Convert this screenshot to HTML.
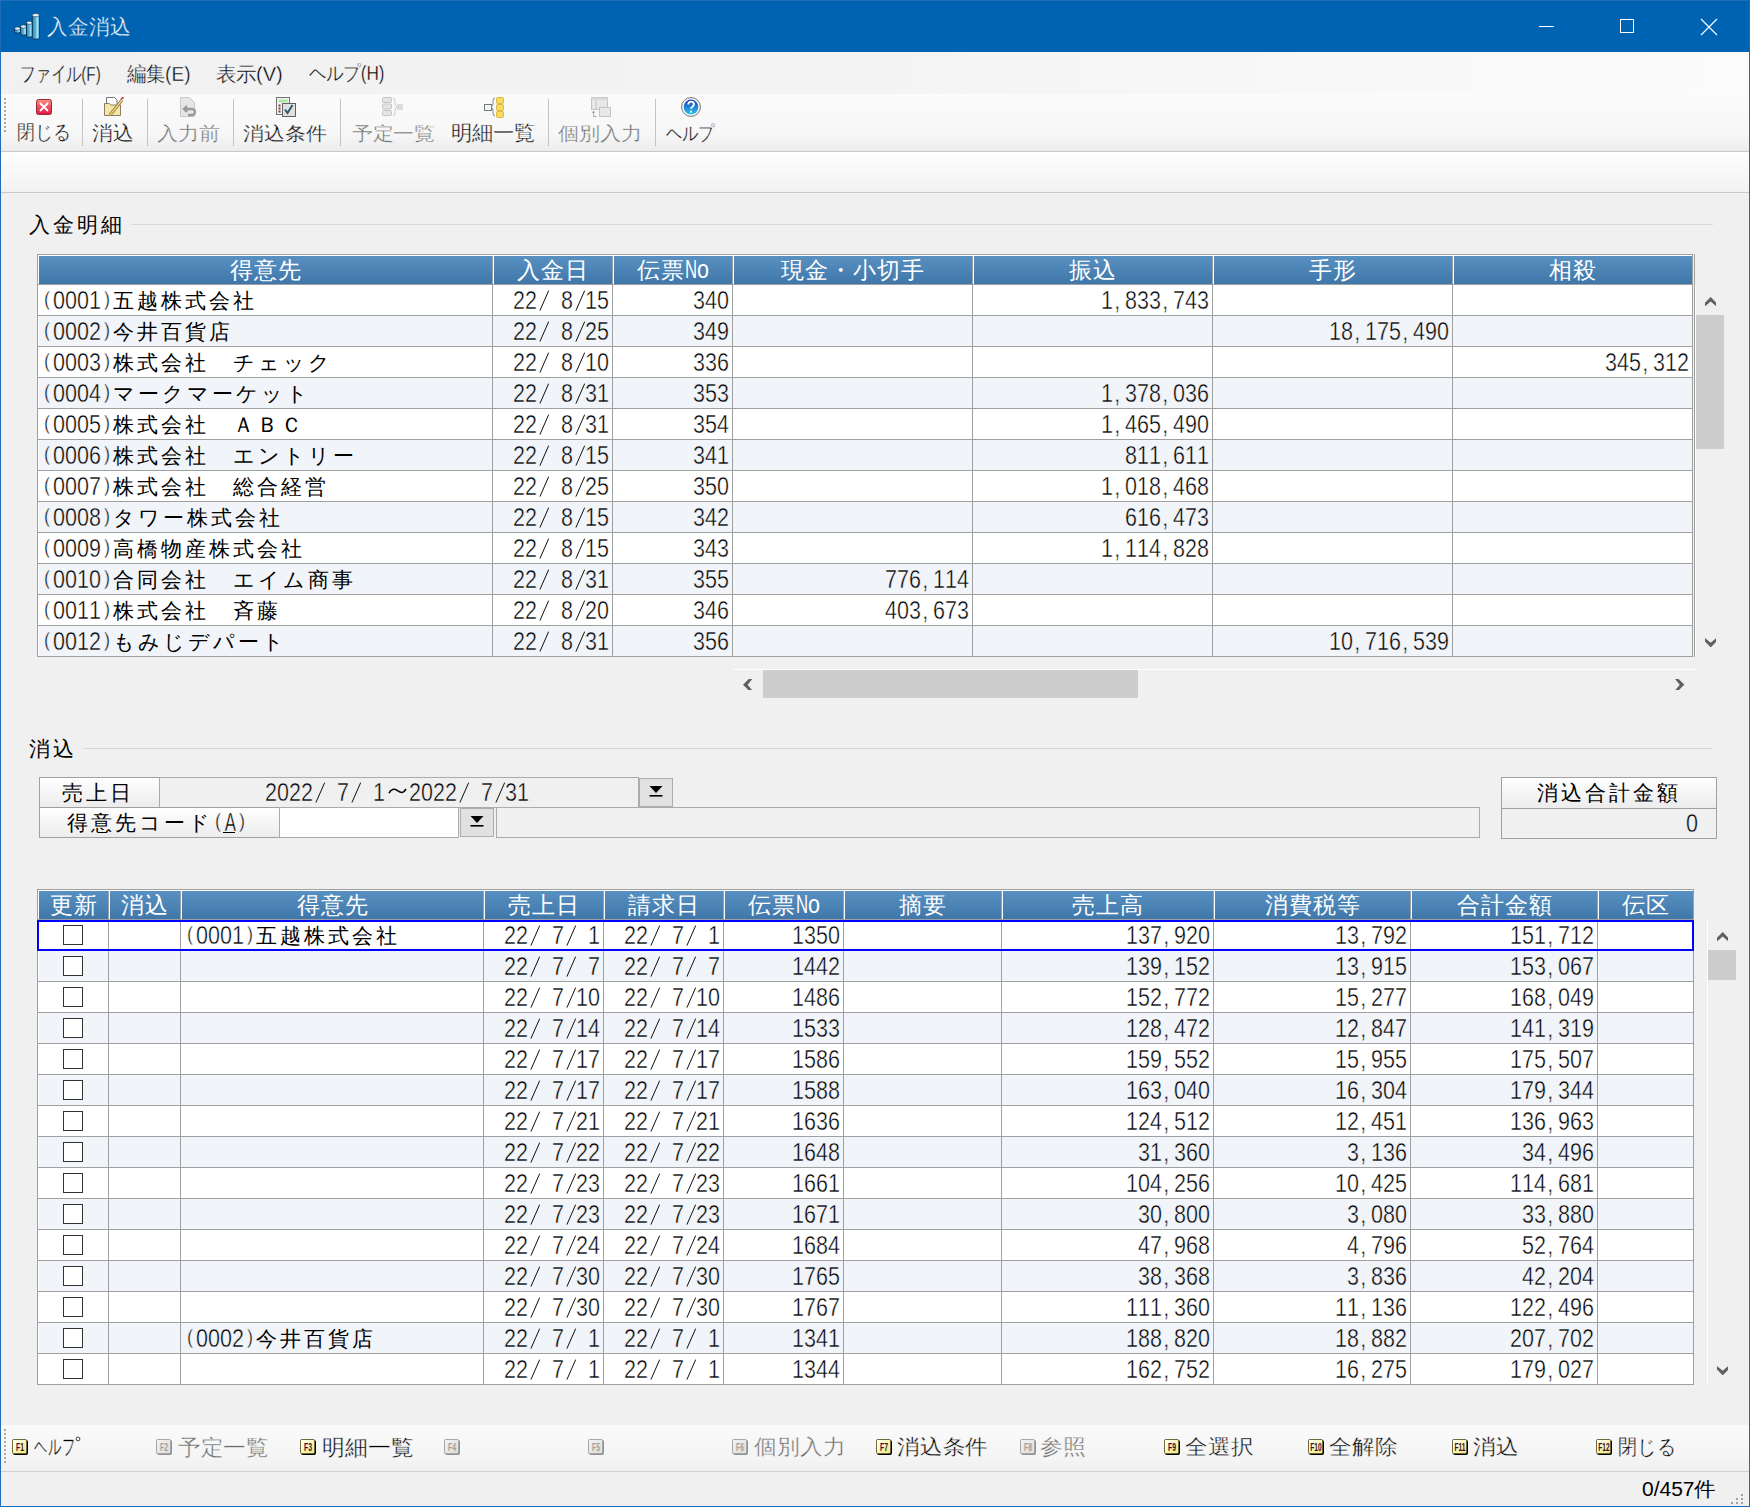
<!DOCTYPE html>
<html><head><meta charset="utf-8"><title>入金消込</title>
<style>
html,body{margin:0;padding:0;width:1750px;height:1507px;overflow:hidden;background:#f0f0f0}
#r{position:relative;width:1750px;height:1507px;overflow:hidden;font-family:"Liberation Sans",sans-serif}
#r div{position:absolute;box-sizing:border-box}
#r svg{position:absolute}
.pt{line-height:40px;white-space:pre;transform-origin:0 0}
.gc{font-family:"Liberation Sans",sans-serif;line-height:30px;white-space:pre}
.gm{font-family:"Liberation Sans",sans-serif;font-size:25px;line-height:30px;white-space:pre;transform:scaleX(0.86000);transform-origin:0 0}
.gm i{display:inline-block;font-style:normal;text-align:center;width:13.9535px}
.gm i.p{font-size:21px;position:relative;top:-3px}
.gm i.c{position:relative;left:-2px}
.gm b{display:inline-block;font-weight:normal;margin:0 -3px;transform:scaleX(.78)}
.fk{font-family:"Liberation Sans",sans-serif;font-weight:bold;line-height:16px;text-align:center;white-space:pre}
</style></head><body><div id="r">
<div style="left:0px;top:0px;width:1750px;height:1507px;background:#f0f0f0"></div>
<div style="left:0px;top:0px;width:1750px;height:52px;background:#0063b1"></div>
<svg style="position:absolute;left:12px;top:12px" width="30" height="30" viewBox="0 0 30 30">
<defs><linearGradient id="gb" x1="0" x2="1" y1="0" y2="0"><stop offset="0" stop-color="#2a86b4"/><stop offset="0.5" stop-color="#58b8dc"/><stop offset="0.8" stop-color="#b8ecfa"/><stop offset="1" stop-color="#5cc0e4"/></linearGradient>
<linearGradient id="gt" x1="0" x2="0" y1="0" y2="1"><stop offset="0" stop-color="#ffffff"/><stop offset="1" stop-color="#c8e8f0"/></linearGradient></defs>
<path d="M2.6 16.6V19.6A2.9000000000000004 1.4 0 0 0 8.4 19.6V16.6Z" fill="url(#gb)" stroke="#0a2840" stroke-width="0.8"/><ellipse cx="5.5" cy="16.6" rx="2.9000000000000004" ry="1.6" fill="url(#gt)" stroke="#0a2840" stroke-width="0.5"/>
<path d="M8.6 14.6V21.8A2.9000000000000004 1.4 0 0 0 14.4 21.8V14.6Z" fill="url(#gb)" stroke="#0a2840" stroke-width="0.8"/><ellipse cx="11.5" cy="14.6" rx="2.9000000000000004" ry="1.6" fill="url(#gt)" stroke="#0a2840" stroke-width="0.5"/>
<path d="M14.5 10.8V23.8A2.9000000000000004 1.4 0 0 0 20.3 23.8V10.8Z" fill="url(#gb)" stroke="#0a2840" stroke-width="0.8"/><ellipse cx="17.4" cy="10.8" rx="2.9000000000000004" ry="1.6" fill="url(#gt)" stroke="#0a2840" stroke-width="0.5"/>
<path d="M20.3 3.2V25.8A3.5 1.4 0 0 0 27.3 25.8V3.2Z" fill="url(#gb)" stroke="#0a2840" stroke-width="0.8"/><ellipse cx="23.8" cy="3.2" rx="3.5" ry="1.6" fill="url(#gt)" stroke="#0a2840" stroke-width="0.5"/>
</svg>
<div style="left:1539px;top:26px;width:15px;height:1px;background:#fff"></div>
<div style="left:1620px;top:19px;width:14px;height:14px;border:1px solid #fff"></div>
<svg style="position:absolute;left:1700px;top:18px" width="18" height="18" viewBox="0 0 18 18"><path d="M1 1L17 17M17 1L1 17" stroke="#fff" stroke-width="1.1"/></svg>
<div style="left:1px;top:52px;width:1748px;height:42px;background:linear-gradient(90deg,#f1f1f1 0%,#f3f3f3 45%,#f8f8f8 75%,#fbfbfb 100%)"></div>
<div style="left:1px;top:94px;width:1748px;height:57px;background:linear-gradient(#fbfbfb,#f7f7f7 70%,#ececec)"></div>
<div style="left:1px;top:151px;width:1748px;height:1px;background:#c9c9c9"></div>
<div style="left:4px;top:98px;width:2px;height:2px;background:#a8a8a8"></div>
<div style="left:4px;top:102px;width:2px;height:2px;background:#a8a8a8"></div>
<div style="left:4px;top:106px;width:2px;height:2px;background:#a8a8a8"></div>
<div style="left:4px;top:110px;width:2px;height:2px;background:#a8a8a8"></div>
<div style="left:4px;top:114px;width:2px;height:2px;background:#a8a8a8"></div>
<div style="left:4px;top:118px;width:2px;height:2px;background:#a8a8a8"></div>
<div style="left:4px;top:122px;width:2px;height:2px;background:#a8a8a8"></div>
<div style="left:4px;top:126px;width:2px;height:2px;background:#a8a8a8"></div>
<div style="left:4px;top:130px;width:2px;height:2px;background:#a8a8a8"></div>
<div style="left:82px;top:99px;width:1px;height:47px;background:#c4c4c4"></div>
<div style="left:147px;top:99px;width:1px;height:47px;background:#c4c4c4"></div>
<div style="left:233px;top:99px;width:1px;height:47px;background:#c4c4c4"></div>
<div style="left:340px;top:99px;width:1px;height:47px;background:#c4c4c4"></div>
<div style="left:548px;top:99px;width:1px;height:47px;background:#c4c4c4"></div>
<div style="left:655px;top:99px;width:1px;height:47px;background:#c4c4c4"></div>
<svg style="position:absolute;left:36px;top:99px" width="16" height="16" viewBox="0 0 16 16">
<defs><linearGradient id="rx" x1="0" x2="0" y1="0" y2="1"><stop offset="0" stop-color="#f7907e"/><stop offset="1" stop-color="#e0144a"/></linearGradient></defs>
<rect x="0.5" y="0.5" width="15" height="15" rx="2" fill="url(#rx)" stroke="#a02838"/>
<path d="M4 4L12 12M12 4L4 12" stroke="#fff" stroke-width="1.8"/></svg>
<svg style="position:absolute;left:104px;top:97px" width="21" height="20" viewBox="0 0 21 20">
<path d="M2.5 0.5h8l2.5 2.5v6h-10.5z" fill="#fff" stroke="#777"/>
<path d="M0.5 6.5h5l1.5 1.5h9.5v10.5h-16z" fill="#f4e6a6" stroke="#8a8060"/>
<path d="M6 18L18 3" stroke="#8a7040" stroke-width="3"/><path d="M6 18L18 3" stroke="#f0d080" stroke-width="1.6"/>
<path d="M17 2L19.5 0.5" stroke="#d04050" stroke-width="2"/></svg>
<svg style="position:absolute;left:180px;top:97px" width="21" height="20" viewBox="0 0 21 20">
<path d="M0.5 0.5h9l5 5v14h-14z" fill="#e6e6e6" stroke="#c8c8c8"/>
<path d="M7 9l-3 3 3 3M4 12h8a3 3 0 0 1 0 6h-4" fill="none" stroke="#9a9a9a" stroke-width="2.4"/></svg>
<svg style="position:absolute;left:276px;top:97px" width="21" height="20" viewBox="0 0 21 20">
<rect x="0.5" y="0.5" width="13" height="17" fill="#f4f4f4" stroke="#707070"/>
<rect x="2.5" y="2.5" width="9" height="3" fill="#a8e8a0"/>
<rect x="2.5" y="7.5" width="2" height="2" fill="#803838"/><rect x="2.5" y="10.5" width="2" height="2" fill="#803838"/><rect x="2.5" y="13.5" width="2" height="2" fill="#803838"/>
<rect x="6.5" y="6.5" width="13" height="13" fill="#e0e0e0" stroke="#606060"/>
<path d="M9 12.5l2.5 3.5 5-8" fill="none" stroke="#305870" stroke-width="2"/></svg>
<svg style="position:absolute;left:382px;top:97px" width="22" height="20" viewBox="0 0 22 20">
<rect x="0.5" y="0.5" width="9" height="5" rx="1" fill="#e4e4e4" stroke="#c4c4c4"/>
<rect x="0.5" y="7" width="9" height="5" rx="1" fill="#e4e4e4" stroke="#c4c4c4"/>
<rect x="0.5" y="13.5" width="9" height="5" rx="1" fill="#e4e4e4" stroke="#c4c4c4"/>
<path d="M11 1q2 0 2 3v3q0 2 2 3q-2 1-2 3v3q0 3-2 3" fill="none" stroke="#c8c8c8"/>
<rect x="15" y="7" width="6" height="6" fill="#dcdcdc"/></svg>
<svg style="position:absolute;left:483px;top:97px" width="22" height="21" viewBox="0 0 22 21">
<rect x="1.5" y="7.5" width="7" height="6" fill="#eef6fa" stroke="#7a7a7a"/>
<path d="M12 1q-2 0-2 3v3q0 2-2 3q2 1 2 3v3q0 3 2 3" fill="none" stroke="#8a8a8a"/>
<rect x="13.5" y="0.5" width="7" height="6" rx="1" fill="#f8dc60" stroke="#e0b840"/>
<rect x="13.5" y="7.5" width="7" height="6" rx="1" fill="#f8dc60" stroke="#e0b840"/>
<rect x="13.5" y="14.5" width="7" height="6" rx="1" fill="#f8dc60" stroke="#e0b840"/></svg>
<svg style="position:absolute;left:591px;top:97px" width="21" height="21" viewBox="0 0 21 21">
<rect x="0.5" y="0.5" width="16" height="12" fill="#e8e8e8" stroke="#c4c4c4"/>
<rect x="0.5" y="0.5" width="16" height="2.5" fill="#d8d8d8"/>
<path d="M5 3v9" stroke="#c4c4c4"/>
<rect x="8.5" y="10.5" width="11" height="9" fill="#e8e8e8" stroke="#c4c4c4"/>
<path d="M2.5 19.5v-5M1 16l1.5-2 1.5 2M2.5 19.5h3" fill="none" stroke="#a8a8a8"/></svg>
<svg style="position:absolute;left:681px;top:97px" width="20" height="20" viewBox="0 0 20 20">
<defs><linearGradient id="hq" x1="0" x2="0" y1="0" y2="1"><stop offset="0" stop-color="#1a3cc0"/><stop offset="1" stop-color="#28c8e8"/></linearGradient></defs>
<circle cx="10" cy="10" r="9.4" fill="#fff" stroke="#606060" stroke-width="0.9"/>
<circle cx="10" cy="10" r="7.4" fill="url(#hq)"/>
<path d="M7.3 7.6q0-3 2.8-3q2.8 0 2.8 2.6q0 1.6-1.6 2.5q-1.1 0.7-1.1 2" fill="none" stroke="#fff" stroke-width="1.9"/>
<circle cx="10.1" cy="14.7" r="1.1" fill="#fff"/></svg>
<div style="left:1px;top:152px;width:1748px;height:40px;background:linear-gradient(#fefefe,#f2f2f2)"></div>
<div style="left:1px;top:192px;width:1748px;height:1px;background:#c9c9c9"></div>
<div class="gc" style="left:29.20px;top:210px;font-size:21px;letter-spacing:3px;color:#000">入金明細</div>
<div style="left:131px;top:224px;width:1582px;height:1px;background:#d9d9d9"></div>
<div class="gc" style="left:29.20px;top:734px;font-size:21px;letter-spacing:3px;color:#000">消込</div>
<div style="left:83px;top:748px;width:1630px;height:1px;background:#d9d9d9"></div>
<div style="left:37px;top:254px;width:1656px;height:403px;background:#a0a0a0"></div>
<div style="left:38px;top:255px;width:1654px;height:401px;background:#fff"></div>
<div style="left:39px;top:256px;width:453px;height:28px;background:linear-gradient(#5790c1,#4077aa)"></div>
<div style="left:494px;top:256px;width:118px;height:28px;background:linear-gradient(#5790c1,#4077aa)"></div>
<div style="left:614px;top:256px;width:118px;height:28px;background:linear-gradient(#5790c1,#4077aa)"></div>
<div style="left:734px;top:256px;width:238px;height:28px;background:linear-gradient(#5790c1,#4077aa)"></div>
<div style="left:974px;top:256px;width:238px;height:28px;background:linear-gradient(#5790c1,#4077aa)"></div>
<div style="left:1214px;top:256px;width:238px;height:28px;background:linear-gradient(#5790c1,#4077aa)"></div>
<div style="left:1454px;top:256px;width:238px;height:28px;background:linear-gradient(#5790c1,#4077aa)"></div>
<div style="left:38px;top:284px;width:1654px;height:1px;background:#a0a0a0"></div>
<div style="left:38px;top:315px;width:1654px;height:1px;background:#a0a0a0"></div>
<div style="left:39px;top:316px;width:1653px;height:30px;background:#f1f4f9"></div>
<div style="left:38px;top:346px;width:1654px;height:1px;background:#a0a0a0"></div>
<div style="left:38px;top:377px;width:1654px;height:1px;background:#a0a0a0"></div>
<div style="left:39px;top:378px;width:1653px;height:30px;background:#f1f4f9"></div>
<div style="left:38px;top:408px;width:1654px;height:1px;background:#a0a0a0"></div>
<div style="left:38px;top:439px;width:1654px;height:1px;background:#a0a0a0"></div>
<div style="left:39px;top:440px;width:1653px;height:30px;background:#f1f4f9"></div>
<div style="left:38px;top:470px;width:1654px;height:1px;background:#a0a0a0"></div>
<div style="left:38px;top:501px;width:1654px;height:1px;background:#a0a0a0"></div>
<div style="left:39px;top:502px;width:1653px;height:30px;background:#f1f4f9"></div>
<div style="left:38px;top:532px;width:1654px;height:1px;background:#a0a0a0"></div>
<div style="left:38px;top:563px;width:1654px;height:1px;background:#a0a0a0"></div>
<div style="left:39px;top:564px;width:1653px;height:30px;background:#f1f4f9"></div>
<div style="left:38px;top:594px;width:1654px;height:1px;background:#a0a0a0"></div>
<div style="left:38px;top:625px;width:1654px;height:1px;background:#a0a0a0"></div>
<div style="left:39px;top:626px;width:1653px;height:30px;background:#f1f4f9"></div>
<div style="left:38px;top:656px;width:1654px;height:1px;background:#a0a0a0"></div>
<div style="left:492px;top:256px;width:1px;height:400px;background:#a0a0a0"></div>
<div style="left:612px;top:256px;width:1px;height:400px;background:#a0a0a0"></div>
<div style="left:732px;top:256px;width:1px;height:400px;background:#a0a0a0"></div>
<div style="left:972px;top:256px;width:1px;height:400px;background:#a0a0a0"></div>
<div style="left:1212px;top:256px;width:1px;height:400px;background:#a0a0a0"></div>
<div style="left:1452px;top:256px;width:1px;height:400px;background:#a0a0a0"></div>
<div style="left:1694px;top:254px;width:1px;height:403px;background:#a0a0a0"></div>
<div class="gc" style="left:229.50px;top:255px;font-size:23px;letter-spacing:1px;color:#fff">得意先</div>
<div class="gc" style="left:517.00px;top:255px;font-size:23px;letter-spacing:1px;color:#fff">入金日</div>
<div class="gc" style="left:637.00px;top:255px;font-size:23px;letter-spacing:1px;color:#fff">伝票</div>
<div class="gm" style="left:685.00px;top:254px;color:#fff"><i><b>N</b></i><i>o</i></div>
<div class="gc" style="left:781.00px;top:255px;font-size:23px;letter-spacing:1px;color:#fff">現金・小切手</div>
<div class="gc" style="left:1069.00px;top:255px;font-size:23px;letter-spacing:1px;color:#fff">振込</div>
<div class="gc" style="left:1309.00px;top:255px;font-size:23px;letter-spacing:1px;color:#fff">手形</div>
<div class="gc" style="left:1549.00px;top:255px;font-size:23px;letter-spacing:1px;color:#fff">相殺</div>
<div class="gm" style="left:41.00px;top:285px;color:#000;-webkit-text-stroke:0.45px #fff"><i class="p">(</i><i>0</i><i>0</i><i>0</i><i>1</i><i class="p">)</i></div>
<div class="gc" style="left:112.70px;top:286px;font-size:21px;letter-spacing:3px;color:#000">五越株式会社</div>
<div class="gm" style="left:512.50px;top:285px;color:#000;-webkit-text-stroke:0.45px #fff"><i>2</i><i>2</i><i>&nbsp;</i><i>&nbsp;</i><i>8</i><i>&nbsp;</i><i>1</i><i>5</i></div>
<svg style="left:536.50px;top:284px" width="12" height="30" viewBox="0 0 12 30"><path d="M2.9 26.6L11.7 6.6" stroke="#000" stroke-width="0.95"/></svg>
<svg style="left:572.50px;top:284px" width="12" height="30" viewBox="0 0 12 30"><path d="M2.9 26.6L11.7 6.6" stroke="#000" stroke-width="0.95"/></svg>
<div class="gm" style="left:692.50px;top:285px;color:#000;-webkit-text-stroke:0.45px #fff"><i>3</i><i>4</i><i>0</i></div>
<div class="gm" style="left:1100.50px;top:285px;color:#000;-webkit-text-stroke:0.45px #fff"><i>1</i><i class="c">,</i><i>8</i><i>3</i><i>3</i><i class="c">,</i><i>7</i><i>4</i><i>3</i></div>
<div class="gm" style="left:41.00px;top:316px;color:#000;-webkit-text-stroke:0.45px #f1f4f9"><i class="p">(</i><i>0</i><i>0</i><i>0</i><i>2</i><i class="p">)</i></div>
<div class="gc" style="left:112.70px;top:317px;font-size:21px;letter-spacing:3px;color:#000">今井百貨店</div>
<div class="gm" style="left:512.50px;top:316px;color:#000;-webkit-text-stroke:0.45px #f1f4f9"><i>2</i><i>2</i><i>&nbsp;</i><i>&nbsp;</i><i>8</i><i>&nbsp;</i><i>2</i><i>5</i></div>
<svg style="left:536.50px;top:315px" width="12" height="30" viewBox="0 0 12 30"><path d="M2.9 26.6L11.7 6.6" stroke="#000" stroke-width="0.95"/></svg>
<svg style="left:572.50px;top:315px" width="12" height="30" viewBox="0 0 12 30"><path d="M2.9 26.6L11.7 6.6" stroke="#000" stroke-width="0.95"/></svg>
<div class="gm" style="left:692.50px;top:316px;color:#000;-webkit-text-stroke:0.45px #f1f4f9"><i>3</i><i>4</i><i>9</i></div>
<div class="gm" style="left:1328.50px;top:316px;color:#000;-webkit-text-stroke:0.45px #f1f4f9"><i>1</i><i>8</i><i class="c">,</i><i>1</i><i>7</i><i>5</i><i class="c">,</i><i>4</i><i>9</i><i>0</i></div>
<div class="gm" style="left:41.00px;top:347px;color:#000;-webkit-text-stroke:0.45px #fff"><i class="p">(</i><i>0</i><i>0</i><i>0</i><i>3</i><i class="p">)</i></div>
<div class="gc" style="left:112.70px;top:348px;font-size:21px;letter-spacing:3px;color:#000">株式会社　チェック</div>
<div class="gm" style="left:512.50px;top:347px;color:#000;-webkit-text-stroke:0.45px #fff"><i>2</i><i>2</i><i>&nbsp;</i><i>&nbsp;</i><i>8</i><i>&nbsp;</i><i>1</i><i>0</i></div>
<svg style="left:536.50px;top:346px" width="12" height="30" viewBox="0 0 12 30"><path d="M2.9 26.6L11.7 6.6" stroke="#000" stroke-width="0.95"/></svg>
<svg style="left:572.50px;top:346px" width="12" height="30" viewBox="0 0 12 30"><path d="M2.9 26.6L11.7 6.6" stroke="#000" stroke-width="0.95"/></svg>
<div class="gm" style="left:692.50px;top:347px;color:#000;-webkit-text-stroke:0.45px #fff"><i>3</i><i>3</i><i>6</i></div>
<div class="gm" style="left:1604.50px;top:347px;color:#000;-webkit-text-stroke:0.45px #fff"><i>3</i><i>4</i><i>5</i><i class="c">,</i><i>3</i><i>1</i><i>2</i></div>
<div class="gm" style="left:41.00px;top:378px;color:#000;-webkit-text-stroke:0.45px #f1f4f9"><i class="p">(</i><i>0</i><i>0</i><i>0</i><i>4</i><i class="p">)</i></div>
<div class="gc" style="left:112.70px;top:379px;font-size:21px;letter-spacing:3px;color:#000">マークマーケット</div>
<div class="gm" style="left:512.50px;top:378px;color:#000;-webkit-text-stroke:0.45px #f1f4f9"><i>2</i><i>2</i><i>&nbsp;</i><i>&nbsp;</i><i>8</i><i>&nbsp;</i><i>3</i><i>1</i></div>
<svg style="left:536.50px;top:377px" width="12" height="30" viewBox="0 0 12 30"><path d="M2.9 26.6L11.7 6.6" stroke="#000" stroke-width="0.95"/></svg>
<svg style="left:572.50px;top:377px" width="12" height="30" viewBox="0 0 12 30"><path d="M2.9 26.6L11.7 6.6" stroke="#000" stroke-width="0.95"/></svg>
<div class="gm" style="left:692.50px;top:378px;color:#000;-webkit-text-stroke:0.45px #f1f4f9"><i>3</i><i>5</i><i>3</i></div>
<div class="gm" style="left:1100.50px;top:378px;color:#000;-webkit-text-stroke:0.45px #f1f4f9"><i>1</i><i class="c">,</i><i>3</i><i>7</i><i>8</i><i class="c">,</i><i>0</i><i>3</i><i>6</i></div>
<div class="gm" style="left:41.00px;top:409px;color:#000;-webkit-text-stroke:0.45px #fff"><i class="p">(</i><i>0</i><i>0</i><i>0</i><i>5</i><i class="p">)</i></div>
<div class="gc" style="left:112.70px;top:410px;font-size:21px;letter-spacing:3px;color:#000">株式会社　ＡＢＣ</div>
<div class="gm" style="left:512.50px;top:409px;color:#000;-webkit-text-stroke:0.45px #fff"><i>2</i><i>2</i><i>&nbsp;</i><i>&nbsp;</i><i>8</i><i>&nbsp;</i><i>3</i><i>1</i></div>
<svg style="left:536.50px;top:408px" width="12" height="30" viewBox="0 0 12 30"><path d="M2.9 26.6L11.7 6.6" stroke="#000" stroke-width="0.95"/></svg>
<svg style="left:572.50px;top:408px" width="12" height="30" viewBox="0 0 12 30"><path d="M2.9 26.6L11.7 6.6" stroke="#000" stroke-width="0.95"/></svg>
<div class="gm" style="left:692.50px;top:409px;color:#000;-webkit-text-stroke:0.45px #fff"><i>3</i><i>5</i><i>4</i></div>
<div class="gm" style="left:1100.50px;top:409px;color:#000;-webkit-text-stroke:0.45px #fff"><i>1</i><i class="c">,</i><i>4</i><i>6</i><i>5</i><i class="c">,</i><i>4</i><i>9</i><i>0</i></div>
<div class="gm" style="left:41.00px;top:440px;color:#000;-webkit-text-stroke:0.45px #f1f4f9"><i class="p">(</i><i>0</i><i>0</i><i>0</i><i>6</i><i class="p">)</i></div>
<div class="gc" style="left:112.70px;top:441px;font-size:21px;letter-spacing:3px;color:#000">株式会社　エントリー</div>
<div class="gm" style="left:512.50px;top:440px;color:#000;-webkit-text-stroke:0.45px #f1f4f9"><i>2</i><i>2</i><i>&nbsp;</i><i>&nbsp;</i><i>8</i><i>&nbsp;</i><i>1</i><i>5</i></div>
<svg style="left:536.50px;top:439px" width="12" height="30" viewBox="0 0 12 30"><path d="M2.9 26.6L11.7 6.6" stroke="#000" stroke-width="0.95"/></svg>
<svg style="left:572.50px;top:439px" width="12" height="30" viewBox="0 0 12 30"><path d="M2.9 26.6L11.7 6.6" stroke="#000" stroke-width="0.95"/></svg>
<div class="gm" style="left:692.50px;top:440px;color:#000;-webkit-text-stroke:0.45px #f1f4f9"><i>3</i><i>4</i><i>1</i></div>
<div class="gm" style="left:1124.50px;top:440px;color:#000;-webkit-text-stroke:0.45px #f1f4f9"><i>8</i><i>1</i><i>1</i><i class="c">,</i><i>6</i><i>1</i><i>1</i></div>
<div class="gm" style="left:41.00px;top:471px;color:#000;-webkit-text-stroke:0.45px #fff"><i class="p">(</i><i>0</i><i>0</i><i>0</i><i>7</i><i class="p">)</i></div>
<div class="gc" style="left:112.70px;top:472px;font-size:21px;letter-spacing:3px;color:#000">株式会社　総合経営</div>
<div class="gm" style="left:512.50px;top:471px;color:#000;-webkit-text-stroke:0.45px #fff"><i>2</i><i>2</i><i>&nbsp;</i><i>&nbsp;</i><i>8</i><i>&nbsp;</i><i>2</i><i>5</i></div>
<svg style="left:536.50px;top:470px" width="12" height="30" viewBox="0 0 12 30"><path d="M2.9 26.6L11.7 6.6" stroke="#000" stroke-width="0.95"/></svg>
<svg style="left:572.50px;top:470px" width="12" height="30" viewBox="0 0 12 30"><path d="M2.9 26.6L11.7 6.6" stroke="#000" stroke-width="0.95"/></svg>
<div class="gm" style="left:692.50px;top:471px;color:#000;-webkit-text-stroke:0.45px #fff"><i>3</i><i>5</i><i>0</i></div>
<div class="gm" style="left:1100.50px;top:471px;color:#000;-webkit-text-stroke:0.45px #fff"><i>1</i><i class="c">,</i><i>0</i><i>1</i><i>8</i><i class="c">,</i><i>4</i><i>6</i><i>8</i></div>
<div class="gm" style="left:41.00px;top:502px;color:#000;-webkit-text-stroke:0.45px #f1f4f9"><i class="p">(</i><i>0</i><i>0</i><i>0</i><i>8</i><i class="p">)</i></div>
<div class="gc" style="left:112.70px;top:503px;font-size:21px;letter-spacing:3px;color:#000">タワー株式会社</div>
<div class="gm" style="left:512.50px;top:502px;color:#000;-webkit-text-stroke:0.45px #f1f4f9"><i>2</i><i>2</i><i>&nbsp;</i><i>&nbsp;</i><i>8</i><i>&nbsp;</i><i>1</i><i>5</i></div>
<svg style="left:536.50px;top:501px" width="12" height="30" viewBox="0 0 12 30"><path d="M2.9 26.6L11.7 6.6" stroke="#000" stroke-width="0.95"/></svg>
<svg style="left:572.50px;top:501px" width="12" height="30" viewBox="0 0 12 30"><path d="M2.9 26.6L11.7 6.6" stroke="#000" stroke-width="0.95"/></svg>
<div class="gm" style="left:692.50px;top:502px;color:#000;-webkit-text-stroke:0.45px #f1f4f9"><i>3</i><i>4</i><i>2</i></div>
<div class="gm" style="left:1124.50px;top:502px;color:#000;-webkit-text-stroke:0.45px #f1f4f9"><i>6</i><i>1</i><i>6</i><i class="c">,</i><i>4</i><i>7</i><i>3</i></div>
<div class="gm" style="left:41.00px;top:533px;color:#000;-webkit-text-stroke:0.45px #fff"><i class="p">(</i><i>0</i><i>0</i><i>0</i><i>9</i><i class="p">)</i></div>
<div class="gc" style="left:112.70px;top:534px;font-size:21px;letter-spacing:3px;color:#000">高橋物産株式会社</div>
<div class="gm" style="left:512.50px;top:533px;color:#000;-webkit-text-stroke:0.45px #fff"><i>2</i><i>2</i><i>&nbsp;</i><i>&nbsp;</i><i>8</i><i>&nbsp;</i><i>1</i><i>5</i></div>
<svg style="left:536.50px;top:532px" width="12" height="30" viewBox="0 0 12 30"><path d="M2.9 26.6L11.7 6.6" stroke="#000" stroke-width="0.95"/></svg>
<svg style="left:572.50px;top:532px" width="12" height="30" viewBox="0 0 12 30"><path d="M2.9 26.6L11.7 6.6" stroke="#000" stroke-width="0.95"/></svg>
<div class="gm" style="left:692.50px;top:533px;color:#000;-webkit-text-stroke:0.45px #fff"><i>3</i><i>4</i><i>3</i></div>
<div class="gm" style="left:1100.50px;top:533px;color:#000;-webkit-text-stroke:0.45px #fff"><i>1</i><i class="c">,</i><i>1</i><i>1</i><i>4</i><i class="c">,</i><i>8</i><i>2</i><i>8</i></div>
<div class="gm" style="left:41.00px;top:564px;color:#000;-webkit-text-stroke:0.45px #f1f4f9"><i class="p">(</i><i>0</i><i>0</i><i>1</i><i>0</i><i class="p">)</i></div>
<div class="gc" style="left:112.70px;top:565px;font-size:21px;letter-spacing:3px;color:#000">合同会社　エイム商事</div>
<div class="gm" style="left:512.50px;top:564px;color:#000;-webkit-text-stroke:0.45px #f1f4f9"><i>2</i><i>2</i><i>&nbsp;</i><i>&nbsp;</i><i>8</i><i>&nbsp;</i><i>3</i><i>1</i></div>
<svg style="left:536.50px;top:563px" width="12" height="30" viewBox="0 0 12 30"><path d="M2.9 26.6L11.7 6.6" stroke="#000" stroke-width="0.95"/></svg>
<svg style="left:572.50px;top:563px" width="12" height="30" viewBox="0 0 12 30"><path d="M2.9 26.6L11.7 6.6" stroke="#000" stroke-width="0.95"/></svg>
<div class="gm" style="left:692.50px;top:564px;color:#000;-webkit-text-stroke:0.45px #f1f4f9"><i>3</i><i>5</i><i>5</i></div>
<div class="gm" style="left:884.50px;top:564px;color:#000;-webkit-text-stroke:0.45px #f1f4f9"><i>7</i><i>7</i><i>6</i><i class="c">,</i><i>1</i><i>1</i><i>4</i></div>
<div class="gm" style="left:41.00px;top:595px;color:#000;-webkit-text-stroke:0.45px #fff"><i class="p">(</i><i>0</i><i>0</i><i>1</i><i>1</i><i class="p">)</i></div>
<div class="gc" style="left:112.70px;top:596px;font-size:21px;letter-spacing:3px;color:#000">株式会社　斉藤</div>
<div class="gm" style="left:512.50px;top:595px;color:#000;-webkit-text-stroke:0.45px #fff"><i>2</i><i>2</i><i>&nbsp;</i><i>&nbsp;</i><i>8</i><i>&nbsp;</i><i>2</i><i>0</i></div>
<svg style="left:536.50px;top:594px" width="12" height="30" viewBox="0 0 12 30"><path d="M2.9 26.6L11.7 6.6" stroke="#000" stroke-width="0.95"/></svg>
<svg style="left:572.50px;top:594px" width="12" height="30" viewBox="0 0 12 30"><path d="M2.9 26.6L11.7 6.6" stroke="#000" stroke-width="0.95"/></svg>
<div class="gm" style="left:692.50px;top:595px;color:#000;-webkit-text-stroke:0.45px #fff"><i>3</i><i>4</i><i>6</i></div>
<div class="gm" style="left:884.50px;top:595px;color:#000;-webkit-text-stroke:0.45px #fff"><i>4</i><i>0</i><i>3</i><i class="c">,</i><i>6</i><i>7</i><i>3</i></div>
<div class="gm" style="left:41.00px;top:626px;color:#000;-webkit-text-stroke:0.45px #f1f4f9"><i class="p">(</i><i>0</i><i>0</i><i>1</i><i>2</i><i class="p">)</i></div>
<div class="gc" style="left:112.70px;top:627px;font-size:21px;letter-spacing:3px;color:#000">もみじデパート</div>
<div class="gm" style="left:512.50px;top:626px;color:#000;-webkit-text-stroke:0.45px #f1f4f9"><i>2</i><i>2</i><i>&nbsp;</i><i>&nbsp;</i><i>8</i><i>&nbsp;</i><i>3</i><i>1</i></div>
<svg style="left:536.50px;top:625px" width="12" height="30" viewBox="0 0 12 30"><path d="M2.9 26.6L11.7 6.6" stroke="#000" stroke-width="0.95"/></svg>
<svg style="left:572.50px;top:625px" width="12" height="30" viewBox="0 0 12 30"><path d="M2.9 26.6L11.7 6.6" stroke="#000" stroke-width="0.95"/></svg>
<div class="gm" style="left:692.50px;top:626px;color:#000;-webkit-text-stroke:0.45px #f1f4f9"><i>3</i><i>5</i><i>6</i></div>
<div class="gm" style="left:1328.50px;top:626px;color:#000;-webkit-text-stroke:0.45px #f1f4f9"><i>1</i><i>0</i><i class="c">,</i><i>7</i><i>1</i><i>6</i><i class="c">,</i><i>5</i><i>3</i><i>9</i></div>
<div style="left:1695px;top:285px;width:1px;height:371px;background:#fff"></div>
<div style="left:1696px;top:315px;width:28px;height:134px;background:#cdcdcd"></div>
<svg style="left:1704.8px;top:297px" width="11.4" height="9.4" viewBox="0 0 11.4 9.4"><path d="M0 9.4L5.7 4.6L11.4 9.4V5.8L5.7 0L0 5.8Z" fill="#606060"/></svg>
<svg style="left:1704.8px;top:638px" width="11.4" height="9.4" viewBox="0 0 11.4 9.4"><path d="M0 0L5.7 4.8L11.4 0V3.6L5.7 9.4L0 3.6Z" fill="#606060"/></svg>
<div style="left:733px;top:669px;width:962px;height:1px;background:#fff"></div>
<div style="left:763px;top:670px;width:375px;height:28px;background:#cdcdcd"></div>
<svg style="left:742.8px;top:679px" width="9.4" height="11.4" viewBox="0 0 9.4 11.4"><path d="M9.4 0H5.8L0 5.7L5.8 11.4H9.4L4.6 5.7Z" fill="#606060"/></svg>
<svg style="left:1674.6px;top:679px" width="9.4" height="11.4" viewBox="0 0 9.4 11.4"><path d="M0 0H3.6L9.4 5.7L3.6 11.4H0L4.8 5.7Z" fill="#606060"/></svg>
<div style="left:39px;top:777px;width:121px;height:31px;background:#a0a0a0"></div>
<div style="left:40px;top:778px;width:119px;height:29px;background:linear-gradient(#ffffff,#ececec)"></div>
<div class="gc" style="left:62.20px;top:778px;font-size:21px;letter-spacing:3px;color:#000">売上日</div>
<div style="left:159px;top:777px;width:480px;height:31px;background:#ababab"></div>
<div style="left:160px;top:778px;width:478px;height:29px;background:#f0f0f0"></div>
<div class="gm" style="left:265.00px;top:777px;color:#000;-webkit-text-stroke:0.45px #f0f0f0"><i>2</i><i>0</i><i>2</i><i>2</i><i>&nbsp;</i><i>&nbsp;</i><i>7</i><i>&nbsp;</i><i>&nbsp;</i><i>1</i></div>
<svg style="left:313.00px;top:776px" width="12" height="30" viewBox="0 0 12 30"><path d="M2.9 26.6L11.7 6.6" stroke="#000" stroke-width="0.95"/></svg>
<svg style="left:349.00px;top:776px" width="12" height="30" viewBox="0 0 12 30"><path d="M2.9 26.6L11.7 6.6" stroke="#000" stroke-width="0.95"/></svg>
<svg style="left:388.00px;top:786px" width="19" height="10" viewBox="0 0 19 10"><path d="M1 7.2C3 3 6 2.2 9.5 4.6S15.5 7.6 18 3" fill="none" stroke="#000" stroke-width="1.6"/></svg>
<div class="gm" style="left:409.00px;top:777px;color:#000;-webkit-text-stroke:0.45px #f0f0f0"><i>2</i><i>0</i><i>2</i><i>2</i><i>&nbsp;</i><i>&nbsp;</i><i>7</i><i>&nbsp;</i><i>3</i><i>1</i></div>
<svg style="left:457.00px;top:776px" width="12" height="30" viewBox="0 0 12 30"><path d="M2.9 26.6L11.7 6.6" stroke="#000" stroke-width="0.95"/></svg>
<svg style="left:493.00px;top:776px" width="12" height="30" viewBox="0 0 12 30"><path d="M2.9 26.6L11.7 6.6" stroke="#000" stroke-width="0.95"/></svg>
<div style="left:639px;top:778px;width:34px;height:29px;background:#adadad"></div>
<div style="left:640px;top:779px;width:32px;height:27px;background:#e1e1e1"></div>
<svg style="position:absolute;left:649.0px;top:785px" width="14" height="13" viewBox="0 0 14 13"><path d="M0.5 1h13L7 8z" fill="#000"/><rect x="0.5" y="10" width="13" height="1.6" fill="#000"/></svg>
<div style="left:39px;top:807px;width:241px;height:31px;background:#a0a0a0"></div>
<div style="left:40px;top:808px;width:239px;height:29px;background:linear-gradient(#ffffff,#ececec)"></div>
<div class="gc" style="left:67.20px;top:808px;font-size:21px;letter-spacing:3px;color:#000">得意先コード</div>
<div class="gm" style="left:211.50px;top:807px;color:#000;-webkit-text-stroke:0.45px #f6f6f6"><i class="p">(</i><i><b>A</b></i><i class="p">)</i></div>
<div style="left:223px;top:832px;width:12px;height:1px;background:#000"></div>
<div style="left:279px;top:807px;width:180px;height:31px;background:#ababab"></div>
<div style="left:280px;top:808px;width:178px;height:29px;background:#fff"></div>
<div style="left:460px;top:808px;width:34px;height:29px;background:#adadad"></div>
<div style="left:461px;top:809px;width:32px;height:27px;background:#e1e1e1"></div>
<svg style="position:absolute;left:470.0px;top:815px" width="14" height="13" viewBox="0 0 14 13"><path d="M0.5 1h13L7 8z" fill="#000"/><rect x="0.5" y="10" width="13" height="1.6" fill="#000"/></svg>
<div style="left:496px;top:807px;width:984px;height:31px;background:#ababab"></div>
<div style="left:497px;top:808px;width:982px;height:29px;background:#f0f0f0"></div>
<div style="left:1501px;top:777px;width:216px;height:62px;background:#a0a0a0"></div>
<div style="left:1502px;top:778px;width:214px;height:30px;background:linear-gradient(#ffffff,#ececec)"></div>
<div style="left:1502px;top:809px;width:214px;height:29px;background:#f0f0f0"></div>
<div class="gc" style="left:1536.70px;top:778px;font-size:21px;letter-spacing:3px;color:#000">消込合計金額</div>
<div class="gm" style="left:1685.50px;top:808px;color:#000;-webkit-text-stroke:0.45px #f0f0f0"><i>0</i></div>
<div style="left:37px;top:889px;width:1657px;height:496px;background:#a0a0a0"></div>
<div style="left:38px;top:890px;width:1655px;height:494px;background:#fff"></div>
<div style="left:39px;top:891px;width:69px;height:28px;background:linear-gradient(#5790c1,#4077aa)"></div>
<div style="left:110px;top:891px;width:70px;height:28px;background:linear-gradient(#5790c1,#4077aa)"></div>
<div style="left:182px;top:891px;width:301px;height:28px;background:linear-gradient(#5790c1,#4077aa)"></div>
<div style="left:485px;top:891px;width:118px;height:28px;background:linear-gradient(#5790c1,#4077aa)"></div>
<div style="left:605px;top:891px;width:118px;height:28px;background:linear-gradient(#5790c1,#4077aa)"></div>
<div style="left:725px;top:891px;width:118px;height:28px;background:linear-gradient(#5790c1,#4077aa)"></div>
<div style="left:845px;top:891px;width:156px;height:28px;background:linear-gradient(#5790c1,#4077aa)"></div>
<div style="left:1003px;top:891px;width:210px;height:28px;background:linear-gradient(#5790c1,#4077aa)"></div>
<div style="left:1215px;top:891px;width:195px;height:28px;background:linear-gradient(#5790c1,#4077aa)"></div>
<div style="left:1412px;top:891px;width:185px;height:28px;background:linear-gradient(#5790c1,#4077aa)"></div>
<div style="left:1599px;top:891px;width:94px;height:28px;background:linear-gradient(#5790c1,#4077aa)"></div>
<div style="left:38px;top:919px;width:1655px;height:1px;background:#a0a0a0"></div>
<div style="left:38px;top:950px;width:1655px;height:1px;background:#a0a0a0"></div>
<div style="left:39px;top:951px;width:1654px;height:30px;background:#f1f4f9"></div>
<div style="left:38px;top:981px;width:1655px;height:1px;background:#a0a0a0"></div>
<div style="left:38px;top:1012px;width:1655px;height:1px;background:#a0a0a0"></div>
<div style="left:39px;top:1013px;width:1654px;height:30px;background:#f1f4f9"></div>
<div style="left:38px;top:1043px;width:1655px;height:1px;background:#a0a0a0"></div>
<div style="left:38px;top:1074px;width:1655px;height:1px;background:#a0a0a0"></div>
<div style="left:39px;top:1075px;width:1654px;height:30px;background:#f1f4f9"></div>
<div style="left:38px;top:1105px;width:1655px;height:1px;background:#a0a0a0"></div>
<div style="left:38px;top:1136px;width:1655px;height:1px;background:#a0a0a0"></div>
<div style="left:39px;top:1137px;width:1654px;height:30px;background:#f1f4f9"></div>
<div style="left:38px;top:1167px;width:1655px;height:1px;background:#a0a0a0"></div>
<div style="left:38px;top:1198px;width:1655px;height:1px;background:#a0a0a0"></div>
<div style="left:39px;top:1199px;width:1654px;height:30px;background:#f1f4f9"></div>
<div style="left:38px;top:1229px;width:1655px;height:1px;background:#a0a0a0"></div>
<div style="left:38px;top:1260px;width:1655px;height:1px;background:#a0a0a0"></div>
<div style="left:39px;top:1261px;width:1654px;height:30px;background:#f1f4f9"></div>
<div style="left:38px;top:1291px;width:1655px;height:1px;background:#a0a0a0"></div>
<div style="left:38px;top:1322px;width:1655px;height:1px;background:#a0a0a0"></div>
<div style="left:39px;top:1323px;width:1654px;height:30px;background:#f1f4f9"></div>
<div style="left:38px;top:1353px;width:1655px;height:1px;background:#a0a0a0"></div>
<div style="left:38px;top:1384px;width:1655px;height:1px;background:#a0a0a0"></div>
<div style="left:108px;top:891px;width:1px;height:493px;background:#a0a0a0"></div>
<div style="left:180px;top:891px;width:1px;height:493px;background:#a0a0a0"></div>
<div style="left:483px;top:891px;width:1px;height:493px;background:#a0a0a0"></div>
<div style="left:603px;top:891px;width:1px;height:493px;background:#a0a0a0"></div>
<div style="left:723px;top:891px;width:1px;height:493px;background:#a0a0a0"></div>
<div style="left:843px;top:891px;width:1px;height:493px;background:#a0a0a0"></div>
<div style="left:1001px;top:891px;width:1px;height:493px;background:#a0a0a0"></div>
<div style="left:1213px;top:891px;width:1px;height:493px;background:#a0a0a0"></div>
<div style="left:1410px;top:891px;width:1px;height:493px;background:#a0a0a0"></div>
<div style="left:1597px;top:891px;width:1px;height:493px;background:#a0a0a0"></div>
<div class="gc" style="left:49.50px;top:890px;font-size:23px;letter-spacing:1px;color:#fff">更新</div>
<div class="gc" style="left:121.00px;top:890px;font-size:23px;letter-spacing:1px;color:#fff">消込</div>
<div class="gc" style="left:296.50px;top:890px;font-size:23px;letter-spacing:1px;color:#fff">得意先</div>
<div class="gc" style="left:508.00px;top:890px;font-size:23px;letter-spacing:1px;color:#fff">売上日</div>
<div class="gc" style="left:628.00px;top:890px;font-size:23px;letter-spacing:1px;color:#fff">請求日</div>
<div class="gc" style="left:748.00px;top:890px;font-size:23px;letter-spacing:1px;color:#fff">伝票</div>
<div class="gm" style="left:796.00px;top:889px;color:#fff"><i><b>N</b></i><i>o</i></div>
<div class="gc" style="left:899.00px;top:890px;font-size:23px;letter-spacing:1px;color:#fff">摘要</div>
<div class="gc" style="left:1072.00px;top:890px;font-size:23px;letter-spacing:1px;color:#fff">売上高</div>
<div class="gc" style="left:1264.50px;top:890px;font-size:23px;letter-spacing:1px;color:#fff">消費税等</div>
<div class="gc" style="left:1456.50px;top:890px;font-size:23px;letter-spacing:1px;color:#fff">合計金額</div>
<div class="gc" style="left:1622.00px;top:890px;font-size:23px;letter-spacing:1px;color:#fff">伝区</div>
<div style="left:63px;top:925px;width:20px;height:20px;background:#333"></div>
<div style="left:64px;top:926px;width:18px;height:18px;background:#fff"></div>
<div class="gm" style="left:184.00px;top:920px;color:#000;-webkit-text-stroke:0.45px #fff"><i class="p">(</i><i>0</i><i>0</i><i>0</i><i>1</i><i class="p">)</i></div>
<div class="gc" style="left:255.70px;top:921px;font-size:21px;letter-spacing:3px;color:#000">五越株式会社</div>
<div class="gm" style="left:503.50px;top:920px;color:#000;-webkit-text-stroke:0.45px #fff"><i>2</i><i>2</i><i>&nbsp;</i><i>&nbsp;</i><i>7</i><i>&nbsp;</i><i>&nbsp;</i><i>1</i></div>
<svg style="left:527.50px;top:919px" width="12" height="30" viewBox="0 0 12 30"><path d="M2.9 26.6L11.7 6.6" stroke="#000" stroke-width="0.95"/></svg>
<svg style="left:563.50px;top:919px" width="12" height="30" viewBox="0 0 12 30"><path d="M2.9 26.6L11.7 6.6" stroke="#000" stroke-width="0.95"/></svg>
<div class="gm" style="left:623.50px;top:920px;color:#000;-webkit-text-stroke:0.45px #fff"><i>2</i><i>2</i><i>&nbsp;</i><i>&nbsp;</i><i>7</i><i>&nbsp;</i><i>&nbsp;</i><i>1</i></div>
<svg style="left:647.50px;top:919px" width="12" height="30" viewBox="0 0 12 30"><path d="M2.9 26.6L11.7 6.6" stroke="#000" stroke-width="0.95"/></svg>
<svg style="left:683.50px;top:919px" width="12" height="30" viewBox="0 0 12 30"><path d="M2.9 26.6L11.7 6.6" stroke="#000" stroke-width="0.95"/></svg>
<div class="gm" style="left:791.50px;top:920px;color:#000;-webkit-text-stroke:0.45px #fff"><i>1</i><i>3</i><i>5</i><i>0</i></div>
<div class="gm" style="left:1125.50px;top:920px;color:#000;-webkit-text-stroke:0.45px #fff"><i>1</i><i>3</i><i>7</i><i class="c">,</i><i>9</i><i>2</i><i>0</i></div>
<div class="gm" style="left:1334.50px;top:920px;color:#000;-webkit-text-stroke:0.45px #fff"><i>1</i><i>3</i><i class="c">,</i><i>7</i><i>9</i><i>2</i></div>
<div class="gm" style="left:1509.50px;top:920px;color:#000;-webkit-text-stroke:0.45px #fff"><i>1</i><i>5</i><i>1</i><i class="c">,</i><i>7</i><i>1</i><i>2</i></div>
<div style="left:63px;top:956px;width:20px;height:20px;background:#333"></div>
<div style="left:64px;top:957px;width:18px;height:18px;background:#fff"></div>
<div class="gm" style="left:503.50px;top:951px;color:#000;-webkit-text-stroke:0.45px #f1f4f9"><i>2</i><i>2</i><i>&nbsp;</i><i>&nbsp;</i><i>7</i><i>&nbsp;</i><i>&nbsp;</i><i>7</i></div>
<svg style="left:527.50px;top:950px" width="12" height="30" viewBox="0 0 12 30"><path d="M2.9 26.6L11.7 6.6" stroke="#000" stroke-width="0.95"/></svg>
<svg style="left:563.50px;top:950px" width="12" height="30" viewBox="0 0 12 30"><path d="M2.9 26.6L11.7 6.6" stroke="#000" stroke-width="0.95"/></svg>
<div class="gm" style="left:623.50px;top:951px;color:#000;-webkit-text-stroke:0.45px #f1f4f9"><i>2</i><i>2</i><i>&nbsp;</i><i>&nbsp;</i><i>7</i><i>&nbsp;</i><i>&nbsp;</i><i>7</i></div>
<svg style="left:647.50px;top:950px" width="12" height="30" viewBox="0 0 12 30"><path d="M2.9 26.6L11.7 6.6" stroke="#000" stroke-width="0.95"/></svg>
<svg style="left:683.50px;top:950px" width="12" height="30" viewBox="0 0 12 30"><path d="M2.9 26.6L11.7 6.6" stroke="#000" stroke-width="0.95"/></svg>
<div class="gm" style="left:791.50px;top:951px;color:#000;-webkit-text-stroke:0.45px #f1f4f9"><i>1</i><i>4</i><i>4</i><i>2</i></div>
<div class="gm" style="left:1125.50px;top:951px;color:#000;-webkit-text-stroke:0.45px #f1f4f9"><i>1</i><i>3</i><i>9</i><i class="c">,</i><i>1</i><i>5</i><i>2</i></div>
<div class="gm" style="left:1334.50px;top:951px;color:#000;-webkit-text-stroke:0.45px #f1f4f9"><i>1</i><i>3</i><i class="c">,</i><i>9</i><i>1</i><i>5</i></div>
<div class="gm" style="left:1509.50px;top:951px;color:#000;-webkit-text-stroke:0.45px #f1f4f9"><i>1</i><i>5</i><i>3</i><i class="c">,</i><i>0</i><i>6</i><i>7</i></div>
<div style="left:63px;top:987px;width:20px;height:20px;background:#333"></div>
<div style="left:64px;top:988px;width:18px;height:18px;background:#fff"></div>
<div class="gm" style="left:503.50px;top:982px;color:#000;-webkit-text-stroke:0.45px #fff"><i>2</i><i>2</i><i>&nbsp;</i><i>&nbsp;</i><i>7</i><i>&nbsp;</i><i>1</i><i>0</i></div>
<svg style="left:527.50px;top:981px" width="12" height="30" viewBox="0 0 12 30"><path d="M2.9 26.6L11.7 6.6" stroke="#000" stroke-width="0.95"/></svg>
<svg style="left:563.50px;top:981px" width="12" height="30" viewBox="0 0 12 30"><path d="M2.9 26.6L11.7 6.6" stroke="#000" stroke-width="0.95"/></svg>
<div class="gm" style="left:623.50px;top:982px;color:#000;-webkit-text-stroke:0.45px #fff"><i>2</i><i>2</i><i>&nbsp;</i><i>&nbsp;</i><i>7</i><i>&nbsp;</i><i>1</i><i>0</i></div>
<svg style="left:647.50px;top:981px" width="12" height="30" viewBox="0 0 12 30"><path d="M2.9 26.6L11.7 6.6" stroke="#000" stroke-width="0.95"/></svg>
<svg style="left:683.50px;top:981px" width="12" height="30" viewBox="0 0 12 30"><path d="M2.9 26.6L11.7 6.6" stroke="#000" stroke-width="0.95"/></svg>
<div class="gm" style="left:791.50px;top:982px;color:#000;-webkit-text-stroke:0.45px #fff"><i>1</i><i>4</i><i>8</i><i>6</i></div>
<div class="gm" style="left:1125.50px;top:982px;color:#000;-webkit-text-stroke:0.45px #fff"><i>1</i><i>5</i><i>2</i><i class="c">,</i><i>7</i><i>7</i><i>2</i></div>
<div class="gm" style="left:1334.50px;top:982px;color:#000;-webkit-text-stroke:0.45px #fff"><i>1</i><i>5</i><i class="c">,</i><i>2</i><i>7</i><i>7</i></div>
<div class="gm" style="left:1509.50px;top:982px;color:#000;-webkit-text-stroke:0.45px #fff"><i>1</i><i>6</i><i>8</i><i class="c">,</i><i>0</i><i>4</i><i>9</i></div>
<div style="left:63px;top:1018px;width:20px;height:20px;background:#333"></div>
<div style="left:64px;top:1019px;width:18px;height:18px;background:#fff"></div>
<div class="gm" style="left:503.50px;top:1013px;color:#000;-webkit-text-stroke:0.45px #f1f4f9"><i>2</i><i>2</i><i>&nbsp;</i><i>&nbsp;</i><i>7</i><i>&nbsp;</i><i>1</i><i>4</i></div>
<svg style="left:527.50px;top:1012px" width="12" height="30" viewBox="0 0 12 30"><path d="M2.9 26.6L11.7 6.6" stroke="#000" stroke-width="0.95"/></svg>
<svg style="left:563.50px;top:1012px" width="12" height="30" viewBox="0 0 12 30"><path d="M2.9 26.6L11.7 6.6" stroke="#000" stroke-width="0.95"/></svg>
<div class="gm" style="left:623.50px;top:1013px;color:#000;-webkit-text-stroke:0.45px #f1f4f9"><i>2</i><i>2</i><i>&nbsp;</i><i>&nbsp;</i><i>7</i><i>&nbsp;</i><i>1</i><i>4</i></div>
<svg style="left:647.50px;top:1012px" width="12" height="30" viewBox="0 0 12 30"><path d="M2.9 26.6L11.7 6.6" stroke="#000" stroke-width="0.95"/></svg>
<svg style="left:683.50px;top:1012px" width="12" height="30" viewBox="0 0 12 30"><path d="M2.9 26.6L11.7 6.6" stroke="#000" stroke-width="0.95"/></svg>
<div class="gm" style="left:791.50px;top:1013px;color:#000;-webkit-text-stroke:0.45px #f1f4f9"><i>1</i><i>5</i><i>3</i><i>3</i></div>
<div class="gm" style="left:1125.50px;top:1013px;color:#000;-webkit-text-stroke:0.45px #f1f4f9"><i>1</i><i>2</i><i>8</i><i class="c">,</i><i>4</i><i>7</i><i>2</i></div>
<div class="gm" style="left:1334.50px;top:1013px;color:#000;-webkit-text-stroke:0.45px #f1f4f9"><i>1</i><i>2</i><i class="c">,</i><i>8</i><i>4</i><i>7</i></div>
<div class="gm" style="left:1509.50px;top:1013px;color:#000;-webkit-text-stroke:0.45px #f1f4f9"><i>1</i><i>4</i><i>1</i><i class="c">,</i><i>3</i><i>1</i><i>9</i></div>
<div style="left:63px;top:1049px;width:20px;height:20px;background:#333"></div>
<div style="left:64px;top:1050px;width:18px;height:18px;background:#fff"></div>
<div class="gm" style="left:503.50px;top:1044px;color:#000;-webkit-text-stroke:0.45px #fff"><i>2</i><i>2</i><i>&nbsp;</i><i>&nbsp;</i><i>7</i><i>&nbsp;</i><i>1</i><i>7</i></div>
<svg style="left:527.50px;top:1043px" width="12" height="30" viewBox="0 0 12 30"><path d="M2.9 26.6L11.7 6.6" stroke="#000" stroke-width="0.95"/></svg>
<svg style="left:563.50px;top:1043px" width="12" height="30" viewBox="0 0 12 30"><path d="M2.9 26.6L11.7 6.6" stroke="#000" stroke-width="0.95"/></svg>
<div class="gm" style="left:623.50px;top:1044px;color:#000;-webkit-text-stroke:0.45px #fff"><i>2</i><i>2</i><i>&nbsp;</i><i>&nbsp;</i><i>7</i><i>&nbsp;</i><i>1</i><i>7</i></div>
<svg style="left:647.50px;top:1043px" width="12" height="30" viewBox="0 0 12 30"><path d="M2.9 26.6L11.7 6.6" stroke="#000" stroke-width="0.95"/></svg>
<svg style="left:683.50px;top:1043px" width="12" height="30" viewBox="0 0 12 30"><path d="M2.9 26.6L11.7 6.6" stroke="#000" stroke-width="0.95"/></svg>
<div class="gm" style="left:791.50px;top:1044px;color:#000;-webkit-text-stroke:0.45px #fff"><i>1</i><i>5</i><i>8</i><i>6</i></div>
<div class="gm" style="left:1125.50px;top:1044px;color:#000;-webkit-text-stroke:0.45px #fff"><i>1</i><i>5</i><i>9</i><i class="c">,</i><i>5</i><i>5</i><i>2</i></div>
<div class="gm" style="left:1334.50px;top:1044px;color:#000;-webkit-text-stroke:0.45px #fff"><i>1</i><i>5</i><i class="c">,</i><i>9</i><i>5</i><i>5</i></div>
<div class="gm" style="left:1509.50px;top:1044px;color:#000;-webkit-text-stroke:0.45px #fff"><i>1</i><i>7</i><i>5</i><i class="c">,</i><i>5</i><i>0</i><i>7</i></div>
<div style="left:63px;top:1080px;width:20px;height:20px;background:#333"></div>
<div style="left:64px;top:1081px;width:18px;height:18px;background:#fff"></div>
<div class="gm" style="left:503.50px;top:1075px;color:#000;-webkit-text-stroke:0.45px #f1f4f9"><i>2</i><i>2</i><i>&nbsp;</i><i>&nbsp;</i><i>7</i><i>&nbsp;</i><i>1</i><i>7</i></div>
<svg style="left:527.50px;top:1074px" width="12" height="30" viewBox="0 0 12 30"><path d="M2.9 26.6L11.7 6.6" stroke="#000" stroke-width="0.95"/></svg>
<svg style="left:563.50px;top:1074px" width="12" height="30" viewBox="0 0 12 30"><path d="M2.9 26.6L11.7 6.6" stroke="#000" stroke-width="0.95"/></svg>
<div class="gm" style="left:623.50px;top:1075px;color:#000;-webkit-text-stroke:0.45px #f1f4f9"><i>2</i><i>2</i><i>&nbsp;</i><i>&nbsp;</i><i>7</i><i>&nbsp;</i><i>1</i><i>7</i></div>
<svg style="left:647.50px;top:1074px" width="12" height="30" viewBox="0 0 12 30"><path d="M2.9 26.6L11.7 6.6" stroke="#000" stroke-width="0.95"/></svg>
<svg style="left:683.50px;top:1074px" width="12" height="30" viewBox="0 0 12 30"><path d="M2.9 26.6L11.7 6.6" stroke="#000" stroke-width="0.95"/></svg>
<div class="gm" style="left:791.50px;top:1075px;color:#000;-webkit-text-stroke:0.45px #f1f4f9"><i>1</i><i>5</i><i>8</i><i>8</i></div>
<div class="gm" style="left:1125.50px;top:1075px;color:#000;-webkit-text-stroke:0.45px #f1f4f9"><i>1</i><i>6</i><i>3</i><i class="c">,</i><i>0</i><i>4</i><i>0</i></div>
<div class="gm" style="left:1334.50px;top:1075px;color:#000;-webkit-text-stroke:0.45px #f1f4f9"><i>1</i><i>6</i><i class="c">,</i><i>3</i><i>0</i><i>4</i></div>
<div class="gm" style="left:1509.50px;top:1075px;color:#000;-webkit-text-stroke:0.45px #f1f4f9"><i>1</i><i>7</i><i>9</i><i class="c">,</i><i>3</i><i>4</i><i>4</i></div>
<div style="left:63px;top:1111px;width:20px;height:20px;background:#333"></div>
<div style="left:64px;top:1112px;width:18px;height:18px;background:#fff"></div>
<div class="gm" style="left:503.50px;top:1106px;color:#000;-webkit-text-stroke:0.45px #fff"><i>2</i><i>2</i><i>&nbsp;</i><i>&nbsp;</i><i>7</i><i>&nbsp;</i><i>2</i><i>1</i></div>
<svg style="left:527.50px;top:1105px" width="12" height="30" viewBox="0 0 12 30"><path d="M2.9 26.6L11.7 6.6" stroke="#000" stroke-width="0.95"/></svg>
<svg style="left:563.50px;top:1105px" width="12" height="30" viewBox="0 0 12 30"><path d="M2.9 26.6L11.7 6.6" stroke="#000" stroke-width="0.95"/></svg>
<div class="gm" style="left:623.50px;top:1106px;color:#000;-webkit-text-stroke:0.45px #fff"><i>2</i><i>2</i><i>&nbsp;</i><i>&nbsp;</i><i>7</i><i>&nbsp;</i><i>2</i><i>1</i></div>
<svg style="left:647.50px;top:1105px" width="12" height="30" viewBox="0 0 12 30"><path d="M2.9 26.6L11.7 6.6" stroke="#000" stroke-width="0.95"/></svg>
<svg style="left:683.50px;top:1105px" width="12" height="30" viewBox="0 0 12 30"><path d="M2.9 26.6L11.7 6.6" stroke="#000" stroke-width="0.95"/></svg>
<div class="gm" style="left:791.50px;top:1106px;color:#000;-webkit-text-stroke:0.45px #fff"><i>1</i><i>6</i><i>3</i><i>6</i></div>
<div class="gm" style="left:1125.50px;top:1106px;color:#000;-webkit-text-stroke:0.45px #fff"><i>1</i><i>2</i><i>4</i><i class="c">,</i><i>5</i><i>1</i><i>2</i></div>
<div class="gm" style="left:1334.50px;top:1106px;color:#000;-webkit-text-stroke:0.45px #fff"><i>1</i><i>2</i><i class="c">,</i><i>4</i><i>5</i><i>1</i></div>
<div class="gm" style="left:1509.50px;top:1106px;color:#000;-webkit-text-stroke:0.45px #fff"><i>1</i><i>3</i><i>6</i><i class="c">,</i><i>9</i><i>6</i><i>3</i></div>
<div style="left:63px;top:1142px;width:20px;height:20px;background:#333"></div>
<div style="left:64px;top:1143px;width:18px;height:18px;background:#fff"></div>
<div class="gm" style="left:503.50px;top:1137px;color:#000;-webkit-text-stroke:0.45px #f1f4f9"><i>2</i><i>2</i><i>&nbsp;</i><i>&nbsp;</i><i>7</i><i>&nbsp;</i><i>2</i><i>2</i></div>
<svg style="left:527.50px;top:1136px" width="12" height="30" viewBox="0 0 12 30"><path d="M2.9 26.6L11.7 6.6" stroke="#000" stroke-width="0.95"/></svg>
<svg style="left:563.50px;top:1136px" width="12" height="30" viewBox="0 0 12 30"><path d="M2.9 26.6L11.7 6.6" stroke="#000" stroke-width="0.95"/></svg>
<div class="gm" style="left:623.50px;top:1137px;color:#000;-webkit-text-stroke:0.45px #f1f4f9"><i>2</i><i>2</i><i>&nbsp;</i><i>&nbsp;</i><i>7</i><i>&nbsp;</i><i>2</i><i>2</i></div>
<svg style="left:647.50px;top:1136px" width="12" height="30" viewBox="0 0 12 30"><path d="M2.9 26.6L11.7 6.6" stroke="#000" stroke-width="0.95"/></svg>
<svg style="left:683.50px;top:1136px" width="12" height="30" viewBox="0 0 12 30"><path d="M2.9 26.6L11.7 6.6" stroke="#000" stroke-width="0.95"/></svg>
<div class="gm" style="left:791.50px;top:1137px;color:#000;-webkit-text-stroke:0.45px #f1f4f9"><i>1</i><i>6</i><i>4</i><i>8</i></div>
<div class="gm" style="left:1137.50px;top:1137px;color:#000;-webkit-text-stroke:0.45px #f1f4f9"><i>3</i><i>1</i><i class="c">,</i><i>3</i><i>6</i><i>0</i></div>
<div class="gm" style="left:1346.50px;top:1137px;color:#000;-webkit-text-stroke:0.45px #f1f4f9"><i>3</i><i class="c">,</i><i>1</i><i>3</i><i>6</i></div>
<div class="gm" style="left:1521.50px;top:1137px;color:#000;-webkit-text-stroke:0.45px #f1f4f9"><i>3</i><i>4</i><i class="c">,</i><i>4</i><i>9</i><i>6</i></div>
<div style="left:63px;top:1173px;width:20px;height:20px;background:#333"></div>
<div style="left:64px;top:1174px;width:18px;height:18px;background:#fff"></div>
<div class="gm" style="left:503.50px;top:1168px;color:#000;-webkit-text-stroke:0.45px #fff"><i>2</i><i>2</i><i>&nbsp;</i><i>&nbsp;</i><i>7</i><i>&nbsp;</i><i>2</i><i>3</i></div>
<svg style="left:527.50px;top:1167px" width="12" height="30" viewBox="0 0 12 30"><path d="M2.9 26.6L11.7 6.6" stroke="#000" stroke-width="0.95"/></svg>
<svg style="left:563.50px;top:1167px" width="12" height="30" viewBox="0 0 12 30"><path d="M2.9 26.6L11.7 6.6" stroke="#000" stroke-width="0.95"/></svg>
<div class="gm" style="left:623.50px;top:1168px;color:#000;-webkit-text-stroke:0.45px #fff"><i>2</i><i>2</i><i>&nbsp;</i><i>&nbsp;</i><i>7</i><i>&nbsp;</i><i>2</i><i>3</i></div>
<svg style="left:647.50px;top:1167px" width="12" height="30" viewBox="0 0 12 30"><path d="M2.9 26.6L11.7 6.6" stroke="#000" stroke-width="0.95"/></svg>
<svg style="left:683.50px;top:1167px" width="12" height="30" viewBox="0 0 12 30"><path d="M2.9 26.6L11.7 6.6" stroke="#000" stroke-width="0.95"/></svg>
<div class="gm" style="left:791.50px;top:1168px;color:#000;-webkit-text-stroke:0.45px #fff"><i>1</i><i>6</i><i>6</i><i>1</i></div>
<div class="gm" style="left:1125.50px;top:1168px;color:#000;-webkit-text-stroke:0.45px #fff"><i>1</i><i>0</i><i>4</i><i class="c">,</i><i>2</i><i>5</i><i>6</i></div>
<div class="gm" style="left:1334.50px;top:1168px;color:#000;-webkit-text-stroke:0.45px #fff"><i>1</i><i>0</i><i class="c">,</i><i>4</i><i>2</i><i>5</i></div>
<div class="gm" style="left:1509.50px;top:1168px;color:#000;-webkit-text-stroke:0.45px #fff"><i>1</i><i>1</i><i>4</i><i class="c">,</i><i>6</i><i>8</i><i>1</i></div>
<div style="left:63px;top:1204px;width:20px;height:20px;background:#333"></div>
<div style="left:64px;top:1205px;width:18px;height:18px;background:#fff"></div>
<div class="gm" style="left:503.50px;top:1199px;color:#000;-webkit-text-stroke:0.45px #f1f4f9"><i>2</i><i>2</i><i>&nbsp;</i><i>&nbsp;</i><i>7</i><i>&nbsp;</i><i>2</i><i>3</i></div>
<svg style="left:527.50px;top:1198px" width="12" height="30" viewBox="0 0 12 30"><path d="M2.9 26.6L11.7 6.6" stroke="#000" stroke-width="0.95"/></svg>
<svg style="left:563.50px;top:1198px" width="12" height="30" viewBox="0 0 12 30"><path d="M2.9 26.6L11.7 6.6" stroke="#000" stroke-width="0.95"/></svg>
<div class="gm" style="left:623.50px;top:1199px;color:#000;-webkit-text-stroke:0.45px #f1f4f9"><i>2</i><i>2</i><i>&nbsp;</i><i>&nbsp;</i><i>7</i><i>&nbsp;</i><i>2</i><i>3</i></div>
<svg style="left:647.50px;top:1198px" width="12" height="30" viewBox="0 0 12 30"><path d="M2.9 26.6L11.7 6.6" stroke="#000" stroke-width="0.95"/></svg>
<svg style="left:683.50px;top:1198px" width="12" height="30" viewBox="0 0 12 30"><path d="M2.9 26.6L11.7 6.6" stroke="#000" stroke-width="0.95"/></svg>
<div class="gm" style="left:791.50px;top:1199px;color:#000;-webkit-text-stroke:0.45px #f1f4f9"><i>1</i><i>6</i><i>7</i><i>1</i></div>
<div class="gm" style="left:1137.50px;top:1199px;color:#000;-webkit-text-stroke:0.45px #f1f4f9"><i>3</i><i>0</i><i class="c">,</i><i>8</i><i>0</i><i>0</i></div>
<div class="gm" style="left:1346.50px;top:1199px;color:#000;-webkit-text-stroke:0.45px #f1f4f9"><i>3</i><i class="c">,</i><i>0</i><i>8</i><i>0</i></div>
<div class="gm" style="left:1521.50px;top:1199px;color:#000;-webkit-text-stroke:0.45px #f1f4f9"><i>3</i><i>3</i><i class="c">,</i><i>8</i><i>8</i><i>0</i></div>
<div style="left:63px;top:1235px;width:20px;height:20px;background:#333"></div>
<div style="left:64px;top:1236px;width:18px;height:18px;background:#fff"></div>
<div class="gm" style="left:503.50px;top:1230px;color:#000;-webkit-text-stroke:0.45px #fff"><i>2</i><i>2</i><i>&nbsp;</i><i>&nbsp;</i><i>7</i><i>&nbsp;</i><i>2</i><i>4</i></div>
<svg style="left:527.50px;top:1229px" width="12" height="30" viewBox="0 0 12 30"><path d="M2.9 26.6L11.7 6.6" stroke="#000" stroke-width="0.95"/></svg>
<svg style="left:563.50px;top:1229px" width="12" height="30" viewBox="0 0 12 30"><path d="M2.9 26.6L11.7 6.6" stroke="#000" stroke-width="0.95"/></svg>
<div class="gm" style="left:623.50px;top:1230px;color:#000;-webkit-text-stroke:0.45px #fff"><i>2</i><i>2</i><i>&nbsp;</i><i>&nbsp;</i><i>7</i><i>&nbsp;</i><i>2</i><i>4</i></div>
<svg style="left:647.50px;top:1229px" width="12" height="30" viewBox="0 0 12 30"><path d="M2.9 26.6L11.7 6.6" stroke="#000" stroke-width="0.95"/></svg>
<svg style="left:683.50px;top:1229px" width="12" height="30" viewBox="0 0 12 30"><path d="M2.9 26.6L11.7 6.6" stroke="#000" stroke-width="0.95"/></svg>
<div class="gm" style="left:791.50px;top:1230px;color:#000;-webkit-text-stroke:0.45px #fff"><i>1</i><i>6</i><i>8</i><i>4</i></div>
<div class="gm" style="left:1137.50px;top:1230px;color:#000;-webkit-text-stroke:0.45px #fff"><i>4</i><i>7</i><i class="c">,</i><i>9</i><i>6</i><i>8</i></div>
<div class="gm" style="left:1346.50px;top:1230px;color:#000;-webkit-text-stroke:0.45px #fff"><i>4</i><i class="c">,</i><i>7</i><i>9</i><i>6</i></div>
<div class="gm" style="left:1521.50px;top:1230px;color:#000;-webkit-text-stroke:0.45px #fff"><i>5</i><i>2</i><i class="c">,</i><i>7</i><i>6</i><i>4</i></div>
<div style="left:63px;top:1266px;width:20px;height:20px;background:#333"></div>
<div style="left:64px;top:1267px;width:18px;height:18px;background:#fff"></div>
<div class="gm" style="left:503.50px;top:1261px;color:#000;-webkit-text-stroke:0.45px #f1f4f9"><i>2</i><i>2</i><i>&nbsp;</i><i>&nbsp;</i><i>7</i><i>&nbsp;</i><i>3</i><i>0</i></div>
<svg style="left:527.50px;top:1260px" width="12" height="30" viewBox="0 0 12 30"><path d="M2.9 26.6L11.7 6.6" stroke="#000" stroke-width="0.95"/></svg>
<svg style="left:563.50px;top:1260px" width="12" height="30" viewBox="0 0 12 30"><path d="M2.9 26.6L11.7 6.6" stroke="#000" stroke-width="0.95"/></svg>
<div class="gm" style="left:623.50px;top:1261px;color:#000;-webkit-text-stroke:0.45px #f1f4f9"><i>2</i><i>2</i><i>&nbsp;</i><i>&nbsp;</i><i>7</i><i>&nbsp;</i><i>3</i><i>0</i></div>
<svg style="left:647.50px;top:1260px" width="12" height="30" viewBox="0 0 12 30"><path d="M2.9 26.6L11.7 6.6" stroke="#000" stroke-width="0.95"/></svg>
<svg style="left:683.50px;top:1260px" width="12" height="30" viewBox="0 0 12 30"><path d="M2.9 26.6L11.7 6.6" stroke="#000" stroke-width="0.95"/></svg>
<div class="gm" style="left:791.50px;top:1261px;color:#000;-webkit-text-stroke:0.45px #f1f4f9"><i>1</i><i>7</i><i>6</i><i>5</i></div>
<div class="gm" style="left:1137.50px;top:1261px;color:#000;-webkit-text-stroke:0.45px #f1f4f9"><i>3</i><i>8</i><i class="c">,</i><i>3</i><i>6</i><i>8</i></div>
<div class="gm" style="left:1346.50px;top:1261px;color:#000;-webkit-text-stroke:0.45px #f1f4f9"><i>3</i><i class="c">,</i><i>8</i><i>3</i><i>6</i></div>
<div class="gm" style="left:1521.50px;top:1261px;color:#000;-webkit-text-stroke:0.45px #f1f4f9"><i>4</i><i>2</i><i class="c">,</i><i>2</i><i>0</i><i>4</i></div>
<div style="left:63px;top:1297px;width:20px;height:20px;background:#333"></div>
<div style="left:64px;top:1298px;width:18px;height:18px;background:#fff"></div>
<div class="gm" style="left:503.50px;top:1292px;color:#000;-webkit-text-stroke:0.45px #fff"><i>2</i><i>2</i><i>&nbsp;</i><i>&nbsp;</i><i>7</i><i>&nbsp;</i><i>3</i><i>0</i></div>
<svg style="left:527.50px;top:1291px" width="12" height="30" viewBox="0 0 12 30"><path d="M2.9 26.6L11.7 6.6" stroke="#000" stroke-width="0.95"/></svg>
<svg style="left:563.50px;top:1291px" width="12" height="30" viewBox="0 0 12 30"><path d="M2.9 26.6L11.7 6.6" stroke="#000" stroke-width="0.95"/></svg>
<div class="gm" style="left:623.50px;top:1292px;color:#000;-webkit-text-stroke:0.45px #fff"><i>2</i><i>2</i><i>&nbsp;</i><i>&nbsp;</i><i>7</i><i>&nbsp;</i><i>3</i><i>0</i></div>
<svg style="left:647.50px;top:1291px" width="12" height="30" viewBox="0 0 12 30"><path d="M2.9 26.6L11.7 6.6" stroke="#000" stroke-width="0.95"/></svg>
<svg style="left:683.50px;top:1291px" width="12" height="30" viewBox="0 0 12 30"><path d="M2.9 26.6L11.7 6.6" stroke="#000" stroke-width="0.95"/></svg>
<div class="gm" style="left:791.50px;top:1292px;color:#000;-webkit-text-stroke:0.45px #fff"><i>1</i><i>7</i><i>6</i><i>7</i></div>
<div class="gm" style="left:1125.50px;top:1292px;color:#000;-webkit-text-stroke:0.45px #fff"><i>1</i><i>1</i><i>1</i><i class="c">,</i><i>3</i><i>6</i><i>0</i></div>
<div class="gm" style="left:1334.50px;top:1292px;color:#000;-webkit-text-stroke:0.45px #fff"><i>1</i><i>1</i><i class="c">,</i><i>1</i><i>3</i><i>6</i></div>
<div class="gm" style="left:1509.50px;top:1292px;color:#000;-webkit-text-stroke:0.45px #fff"><i>1</i><i>2</i><i>2</i><i class="c">,</i><i>4</i><i>9</i><i>6</i></div>
<div style="left:63px;top:1328px;width:20px;height:20px;background:#333"></div>
<div style="left:64px;top:1329px;width:18px;height:18px;background:#fff"></div>
<div class="gm" style="left:184.00px;top:1323px;color:#000;-webkit-text-stroke:0.45px #f1f4f9"><i class="p">(</i><i>0</i><i>0</i><i>0</i><i>2</i><i class="p">)</i></div>
<div class="gc" style="left:255.70px;top:1324px;font-size:21px;letter-spacing:3px;color:#000">今井百貨店</div>
<div class="gm" style="left:503.50px;top:1323px;color:#000;-webkit-text-stroke:0.45px #f1f4f9"><i>2</i><i>2</i><i>&nbsp;</i><i>&nbsp;</i><i>7</i><i>&nbsp;</i><i>&nbsp;</i><i>1</i></div>
<svg style="left:527.50px;top:1322px" width="12" height="30" viewBox="0 0 12 30"><path d="M2.9 26.6L11.7 6.6" stroke="#000" stroke-width="0.95"/></svg>
<svg style="left:563.50px;top:1322px" width="12" height="30" viewBox="0 0 12 30"><path d="M2.9 26.6L11.7 6.6" stroke="#000" stroke-width="0.95"/></svg>
<div class="gm" style="left:623.50px;top:1323px;color:#000;-webkit-text-stroke:0.45px #f1f4f9"><i>2</i><i>2</i><i>&nbsp;</i><i>&nbsp;</i><i>7</i><i>&nbsp;</i><i>&nbsp;</i><i>1</i></div>
<svg style="left:647.50px;top:1322px" width="12" height="30" viewBox="0 0 12 30"><path d="M2.9 26.6L11.7 6.6" stroke="#000" stroke-width="0.95"/></svg>
<svg style="left:683.50px;top:1322px" width="12" height="30" viewBox="0 0 12 30"><path d="M2.9 26.6L11.7 6.6" stroke="#000" stroke-width="0.95"/></svg>
<div class="gm" style="left:791.50px;top:1323px;color:#000;-webkit-text-stroke:0.45px #f1f4f9"><i>1</i><i>3</i><i>4</i><i>1</i></div>
<div class="gm" style="left:1125.50px;top:1323px;color:#000;-webkit-text-stroke:0.45px #f1f4f9"><i>1</i><i>8</i><i>8</i><i class="c">,</i><i>8</i><i>2</i><i>0</i></div>
<div class="gm" style="left:1334.50px;top:1323px;color:#000;-webkit-text-stroke:0.45px #f1f4f9"><i>1</i><i>8</i><i class="c">,</i><i>8</i><i>8</i><i>2</i></div>
<div class="gm" style="left:1509.50px;top:1323px;color:#000;-webkit-text-stroke:0.45px #f1f4f9"><i>2</i><i>0</i><i>7</i><i class="c">,</i><i>7</i><i>0</i><i>2</i></div>
<div style="left:63px;top:1359px;width:20px;height:20px;background:#333"></div>
<div style="left:64px;top:1360px;width:18px;height:18px;background:#fff"></div>
<div class="gm" style="left:503.50px;top:1354px;color:#000;-webkit-text-stroke:0.45px #fff"><i>2</i><i>2</i><i>&nbsp;</i><i>&nbsp;</i><i>7</i><i>&nbsp;</i><i>&nbsp;</i><i>1</i></div>
<svg style="left:527.50px;top:1353px" width="12" height="30" viewBox="0 0 12 30"><path d="M2.9 26.6L11.7 6.6" stroke="#000" stroke-width="0.95"/></svg>
<svg style="left:563.50px;top:1353px" width="12" height="30" viewBox="0 0 12 30"><path d="M2.9 26.6L11.7 6.6" stroke="#000" stroke-width="0.95"/></svg>
<div class="gm" style="left:623.50px;top:1354px;color:#000;-webkit-text-stroke:0.45px #fff"><i>2</i><i>2</i><i>&nbsp;</i><i>&nbsp;</i><i>7</i><i>&nbsp;</i><i>&nbsp;</i><i>1</i></div>
<svg style="left:647.50px;top:1353px" width="12" height="30" viewBox="0 0 12 30"><path d="M2.9 26.6L11.7 6.6" stroke="#000" stroke-width="0.95"/></svg>
<svg style="left:683.50px;top:1353px" width="12" height="30" viewBox="0 0 12 30"><path d="M2.9 26.6L11.7 6.6" stroke="#000" stroke-width="0.95"/></svg>
<div class="gm" style="left:791.50px;top:1354px;color:#000;-webkit-text-stroke:0.45px #fff"><i>1</i><i>3</i><i>4</i><i>4</i></div>
<div class="gm" style="left:1125.50px;top:1354px;color:#000;-webkit-text-stroke:0.45px #fff"><i>1</i><i>6</i><i>2</i><i class="c">,</i><i>7</i><i>5</i><i>2</i></div>
<div class="gm" style="left:1334.50px;top:1354px;color:#000;-webkit-text-stroke:0.45px #fff"><i>1</i><i>6</i><i class="c">,</i><i>2</i><i>7</i><i>5</i></div>
<div class="gm" style="left:1509.50px;top:1354px;color:#000;-webkit-text-stroke:0.45px #fff"><i>1</i><i>7</i><i>9</i><i class="c">,</i><i>0</i><i>2</i><i>7</i></div>
<div style="left:37px;top:920px;width:1657px;height:31px;border:2px solid #0000ff;box-sizing:border-box;background:transparent"></div>
<div style="left:1707px;top:920px;width:1px;height:464px;background:#fff"></div>
<div style="left:1708px;top:950px;width:28px;height:30px;background:#cdcdcd"></div>
<svg style="left:1716.6px;top:932px" width="11.4" height="9.4" viewBox="0 0 11.4 9.4"><path d="M0 9.4L5.7 4.6L11.4 9.4V5.8L5.7 0L0 5.8Z" fill="#606060"/></svg>
<svg style="left:1716.6px;top:1366px" width="11.4" height="9.4" viewBox="0 0 11.4 9.4"><path d="M0 0L5.7 4.8L11.4 0V3.6L5.7 9.4L0 3.6Z" fill="#606060"/></svg>
<div style="left:1px;top:1425px;width:1748px;height:46px;background:linear-gradient(#fafafa,#f5f5f5 70%,#efefef)"></div>
<div style="left:1px;top:1471px;width:1748px;height:1px;background:#d0d0d0"></div>
<div style="left:4px;top:1429px;width:2px;height:2px;background:#a8a8a8"></div>
<div style="left:4px;top:1433px;width:2px;height:2px;background:#a8a8a8"></div>
<div style="left:4px;top:1437px;width:2px;height:2px;background:#a8a8a8"></div>
<div style="left:4px;top:1441px;width:2px;height:2px;background:#a8a8a8"></div>
<div style="left:4px;top:1445px;width:2px;height:2px;background:#a8a8a8"></div>
<div style="left:4px;top:1449px;width:2px;height:2px;background:#a8a8a8"></div>
<div style="left:4px;top:1453px;width:2px;height:2px;background:#a8a8a8"></div>
<div style="left:4px;top:1457px;width:2px;height:2px;background:#a8a8a8"></div>
<div style="left:4px;top:1461px;width:2px;height:2px;background:#a8a8a8"></div>
<div style="left:13px;top:1440px;width:15px;height:15px;background:#000;border-radius:2px"></div>
<div style="left:12px;top:1439px;width:15px;height:15px;background:#6e6a3c;border-radius:2px"></div>
<div style="left:13px;top:1440px;width:13px;height:13px;background:linear-gradient(135deg,#ffffff,#f8f4a8 60%,#f0e880)"></div>
<div class="fk" style="left:2px;top:1439px;width:36px;color:#3a0a3a;font-size:11px;transform:scaleX(0.62)">F1</div>
<div style="left:157px;top:1440px;width:15px;height:15px;background:#909090;border-radius:2px"></div>
<div style="left:156px;top:1439px;width:15px;height:15px;background:#a8a8a8;border-radius:2px"></div>
<div style="left:157px;top:1440px;width:13px;height:13px;background:linear-gradient(135deg,#f4f4f4,#dcdcdc)"></div>
<div class="fk" style="left:146px;top:1439px;width:36px;color:#a0a0a0;font-size:11px;transform:scaleX(0.62)">F2</div>
<div style="left:301px;top:1440px;width:15px;height:15px;background:#000;border-radius:2px"></div>
<div style="left:300px;top:1439px;width:15px;height:15px;background:#6e6a3c;border-radius:2px"></div>
<div style="left:301px;top:1440px;width:13px;height:13px;background:linear-gradient(135deg,#ffffff,#f8f4a8 60%,#f0e880)"></div>
<div class="fk" style="left:290px;top:1439px;width:36px;color:#3a0a3a;font-size:11px;transform:scaleX(0.62)">F3</div>
<div style="left:445px;top:1440px;width:15px;height:15px;background:#909090;border-radius:2px"></div>
<div style="left:444px;top:1439px;width:15px;height:15px;background:#a8a8a8;border-radius:2px"></div>
<div style="left:445px;top:1440px;width:13px;height:13px;background:linear-gradient(135deg,#f4f4f4,#dcdcdc)"></div>
<div class="fk" style="left:434px;top:1439px;width:36px;color:#a0a0a0;font-size:11px;transform:scaleX(0.62)">F4</div>
<div style="left:589px;top:1440px;width:15px;height:15px;background:#909090;border-radius:2px"></div>
<div style="left:588px;top:1439px;width:15px;height:15px;background:#a8a8a8;border-radius:2px"></div>
<div style="left:589px;top:1440px;width:13px;height:13px;background:linear-gradient(135deg,#f4f4f4,#dcdcdc)"></div>
<div class="fk" style="left:578px;top:1439px;width:36px;color:#a0a0a0;font-size:11px;transform:scaleX(0.62)">F5</div>
<div style="left:733px;top:1440px;width:15px;height:15px;background:#909090;border-radius:2px"></div>
<div style="left:732px;top:1439px;width:15px;height:15px;background:#a8a8a8;border-radius:2px"></div>
<div style="left:733px;top:1440px;width:13px;height:13px;background:linear-gradient(135deg,#f4f4f4,#dcdcdc)"></div>
<div class="fk" style="left:722px;top:1439px;width:36px;color:#a0a0a0;font-size:11px;transform:scaleX(0.62)">F6</div>
<div style="left:877px;top:1440px;width:15px;height:15px;background:#000;border-radius:2px"></div>
<div style="left:876px;top:1439px;width:15px;height:15px;background:#6e6a3c;border-radius:2px"></div>
<div style="left:877px;top:1440px;width:13px;height:13px;background:linear-gradient(135deg,#ffffff,#f8f4a8 60%,#f0e880)"></div>
<div class="fk" style="left:866px;top:1439px;width:36px;color:#3a0a3a;font-size:11px;transform:scaleX(0.62)">F7</div>
<div style="left:1021px;top:1440px;width:15px;height:15px;background:#909090;border-radius:2px"></div>
<div style="left:1020px;top:1439px;width:15px;height:15px;background:#a8a8a8;border-radius:2px"></div>
<div style="left:1021px;top:1440px;width:13px;height:13px;background:linear-gradient(135deg,#f4f4f4,#dcdcdc)"></div>
<div class="fk" style="left:1010px;top:1439px;width:36px;color:#a0a0a0;font-size:11px;transform:scaleX(0.62)">F8</div>
<div style="left:1165px;top:1440px;width:15px;height:15px;background:#000;border-radius:2px"></div>
<div style="left:1164px;top:1439px;width:15px;height:15px;background:#6e6a3c;border-radius:2px"></div>
<div style="left:1165px;top:1440px;width:13px;height:13px;background:linear-gradient(135deg,#ffffff,#f8f4a8 60%,#f0e880)"></div>
<div class="fk" style="left:1154px;top:1439px;width:36px;color:#3a0a3a;font-size:11px;transform:scaleX(0.62)">F9</div>
<div style="left:1309px;top:1440px;width:15px;height:15px;background:#000;border-radius:2px"></div>
<div style="left:1308px;top:1439px;width:15px;height:15px;background:#6e6a3c;border-radius:2px"></div>
<div style="left:1309px;top:1440px;width:13px;height:13px;background:linear-gradient(135deg,#ffffff,#f8f4a8 60%,#f0e880)"></div>
<div class="fk" style="left:1298px;top:1439px;width:36px;color:#3a0a3a;font-size:11px;transform:scaleX(0.6)">F10</div>
<div style="left:1453px;top:1440px;width:15px;height:15px;background:#000;border-radius:2px"></div>
<div style="left:1452px;top:1439px;width:15px;height:15px;background:#6e6a3c;border-radius:2px"></div>
<div style="left:1453px;top:1440px;width:13px;height:13px;background:linear-gradient(135deg,#ffffff,#f8f4a8 60%,#f0e880)"></div>
<div class="fk" style="left:1442px;top:1439px;width:36px;color:#3a0a3a;font-size:11px;transform:scaleX(0.6)">F11</div>
<div style="left:1597px;top:1440px;width:15px;height:15px;background:#000;border-radius:2px"></div>
<div style="left:1596px;top:1439px;width:15px;height:15px;background:#6e6a3c;border-radius:2px"></div>
<div style="left:1597px;top:1440px;width:13px;height:13px;background:linear-gradient(135deg,#ffffff,#f8f4a8 60%,#f0e880)"></div>
<div class="fk" style="left:1586px;top:1439px;width:36px;color:#3a0a3a;font-size:11px;transform:scaleX(0.6)">F12</div>
<svg style="left:74.6px;top:1436.3px" width="6" height="6" viewBox="0 0 6 6"><circle cx="3" cy="3" r="1.9" fill="none" stroke="#333" stroke-width="0.9"/></svg>
<div style="left:1741px;top:1494px;width:2px;height:2px;background:#a0a0a0"></div>
<div style="left:1736px;top:1498px;width:2px;height:2px;background:#a0a0a0"></div>
<div style="left:1741px;top:1498px;width:2px;height:2px;background:#a0a0a0"></div>
<div style="left:1731px;top:1502px;width:2px;height:2px;background:#a0a0a0"></div>
<div style="left:1736px;top:1502px;width:2px;height:2px;background:#a0a0a0"></div>
<div style="left:1741px;top:1502px;width:2px;height:2px;background:#a0a0a0"></div>
<div style="left:0px;top:0px;width:1px;height:1507px;background:#1c6fb6"></div>
<div style="left:1749px;top:0px;width:1px;height:1507px;background:#1c6fb6"></div>
<div style="left:0px;top:1506px;width:1750px;height:1px;background:#1c6fb6"></div>
<div style="left:0px;top:0px;width:1750px;height:1px;background:#1c6fb6"></div>
<div class="pt" style="left:46.80px;top:6.90px;font-size:21px;color:#fff;font-weight:normal;transform:scale(0.9963,1.0100);-webkit-text-stroke:0.35px #0063b1">入金消込</div>
<div class="pt" style="left:19.77px;top:53.08px;font-size:20px;color:#000;font-weight:normal;transform:scale(0.7650,1.0263);-webkit-text-stroke:0.35px #f3f3f3">ファイル(F)</div>
<div class="pt" style="left:127.00px;top:52.97px;font-size:20px;color:#000;font-weight:normal;transform:scale(0.9530,1.0300);-webkit-text-stroke:0.35px #f3f3f3">編集(E)</div>
<div class="pt" style="left:216.00px;top:54.68px;font-size:20px;color:#000;font-weight:normal;transform:scale(1.0015,0.9750);-webkit-text-stroke:0.35px #f3f3f3">表示(V)</div>
<div class="pt" style="left:309.00px;top:54.49px;font-size:20px;color:#000;font-weight:normal;transform:scale(0.8609,0.9810);-webkit-text-stroke:0.35px #f3f3f3">ヘルプ(H)</div>
<div class="pt" style="left:17.11px;top:112.00px;font-size:20px;color:#000;font-weight:normal;transform:scale(0.8929,1.0000);-webkit-text-stroke:0.35px #f8f8f8">閉じる</div>
<div class="pt" style="left:92.46px;top:113.00px;font-size:20px;color:#000;font-weight:normal;transform:scale(1.0395,1.0000);-webkit-text-stroke:0.35px #f8f8f8">消込</div>
<div class="pt" style="left:156.95px;top:113.50px;font-size:20px;color:#6c6c6c;font-weight:normal;transform:scale(1.0517,0.9500);-webkit-text-stroke:0.35px #f8f8f8">入力前</div>
<div class="pt" style="left:242.95px;top:113.50px;font-size:20px;color:#000;font-weight:normal;transform:scale(1.0513,0.9500);-webkit-text-stroke:0.35px #f8f8f8">消込条件</div>
<div class="pt" style="left:352.00px;top:115.10px;font-size:20px;color:#6c6c6c;font-weight:normal;transform:scale(1.0253,0.9300);-webkit-text-stroke:0.35px #f8f8f8">予定一覧</div>
<div class="pt" style="left:451.45px;top:112.05px;font-size:20px;color:#000;font-weight:normal;transform:scale(1.0474,1.0316);-webkit-text-stroke:0.35px #f8f8f8">明細一覧</div>
<div class="pt" style="left:558.40px;top:113.50px;font-size:20px;color:#6c6c6c;font-weight:normal;transform:scale(1.0558,0.9500);-webkit-text-stroke:0.35px #f8f8f8">個別入力</div>
<div class="pt" style="left:665.80px;top:113.16px;font-size:20px;color:#000;font-weight:normal;transform:scale(0.8016,0.9842);-webkit-text-stroke:0.35px #f8f8f8">ヘルプ</div>
<div class="pt" style="left:33.70px;top:1426.43px;font-size:21px;color:#000;font-weight:normal;transform:scale(0.6323,1.0438);-webkit-text-stroke:0.35px #f6f6f6">ヘルフ</div>
<div class="pt" style="left:178.40px;top:1426.50px;font-size:21px;color:#6c6c6c;font-weight:normal;transform:scale(1.0795,1.0500);-webkit-text-stroke:0.35px #f6f6f6">予定一覧</div>
<div class="pt" style="left:321.71px;top:1426.50px;font-size:21px;color:#000;font-weight:normal;transform:scale(1.0878,1.0500);-webkit-text-stroke:0.35px #f6f6f6">明細一覧</div>
<div class="pt" style="left:753.70px;top:1426.85px;font-size:21px;color:#6c6c6c;font-weight:normal;transform:scale(1.0988,1.0150);-webkit-text-stroke:0.35px #f6f6f6">個別入力</div>
<div class="pt" style="left:896.91px;top:1426.85px;font-size:21px;color:#000;font-weight:normal;transform:scale(1.0866,1.0150);-webkit-text-stroke:0.35px #f6f6f6">消込条件</div>
<div class="pt" style="left:1040.29px;top:1426.85px;font-size:21px;color:#6c6c6c;font-weight:normal;transform:scale(1.1125,1.0150);-webkit-text-stroke:0.35px #f6f6f6">参照</div>
<div class="pt" style="left:1185.10px;top:1426.85px;font-size:21px;color:#000;font-weight:normal;transform:scale(1.0967,1.0150);-webkit-text-stroke:0.35px #f6f6f6">全選択</div>
<div class="pt" style="left:1328.80px;top:1426.85px;font-size:21px;color:#000;font-weight:normal;transform:scale(1.0984,1.0150);-webkit-text-stroke:0.35px #f6f6f6">全解除</div>
<div class="pt" style="left:1472.80px;top:1426.85px;font-size:21px;color:#000;font-weight:normal;transform:scale(1.1000,1.0150);-webkit-text-stroke:0.35px #f6f6f6">消込</div>
<div class="pt" style="left:1617.68px;top:1426.85px;font-size:21px;color:#000;font-weight:normal;transform:scale(0.9167,1.0150);-webkit-text-stroke:0.35px #f6f6f6">閉じる</div>
<div class="pt" style="left:1641.65px;top:1470.23px;font-size:20px;color:#000;font-weight:normal;transform:scale(1.0485,0.9789)">0/457件</div></div></body></html>
